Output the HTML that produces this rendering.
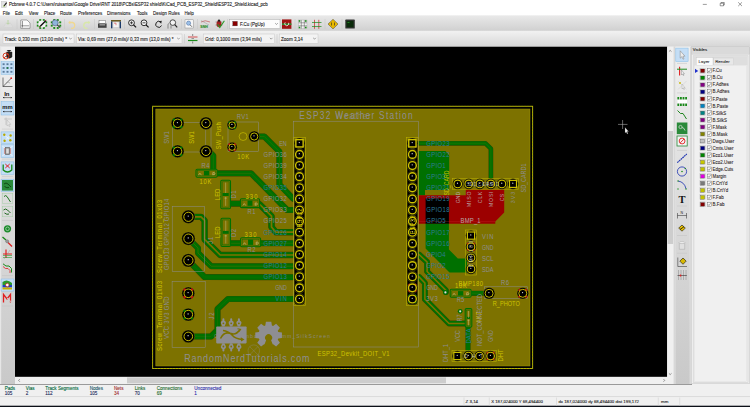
<!DOCTYPE html><html><head><meta charset="utf-8"><style>html,body{margin:0;padding:0;background:#f0f0f0;overflow:hidden}svg{display:block}</style></head><body><svg width="750" height="407" viewBox="0 0 750 407"><defs><linearGradient id="tb" x1="0" y1="0" x2="0" y2="1"><stop offset="0" stop-color="#e9e9e9"/><stop offset="1" stop-color="#cfcfcf"/></linearGradient><linearGradient id="tb2" x1="0" y1="0" x2="0" y2="1"><stop offset="0" stop-color="#f1f1f1"/><stop offset="1" stop-color="#d6d6d6"/></linearGradient><linearGradient id="vt" x1="0" y1="0" x2="0" y2="1"><stop offset="0" stop-color="#efefef"/><stop offset="0.45" stop-color="#dcdcdc"/><stop offset="1" stop-color="#c9c9c9"/></linearGradient><linearGradient id="cb" x1="0" y1="0" x2="0" y2="1"><stop offset="0" stop-color="#f4f4f4"/><stop offset="1" stop-color="#e6e6e6"/></linearGradient></defs><rect x="0" y="0" width="750" height="407" fill="#f0f0f0" /><rect x="0" y="0" width="750" height="15.5" fill="#ffffff" /><rect x="1.3" y="1.3" width="5.2" height="6.3" fill="#e4e4e4" stroke="#b8b8b8" stroke-width="0.4"/><path d="M4 6 L6.6 2.6" stroke="#111" stroke-width="1.1"/><circle cx="3.9" cy="6.1" r="0.6" fill="#7ab800"/><text x="8.9" y="6.1" font-family="Liberation Sans" font-size="4.41" fill="#1a1a1a" stroke="#1a1a1a" stroke-width="0.1" text-anchor="start" font-weight="normal" >Pcbnew 4.0.7 C:\Users\ruisantos\Google Drive\RNT 2018\PCBs\ESP32 shield\KiCad_PCB_ESP32_Shield\ESP32_Shield.kicad_pcb</text><path d="M702.8 4.4 H706.8" stroke="#222" stroke-width="0.45"/><path d="M720.2 3.3 H723.5 V5.8 H720.2 Z M721 3.3 V2.5 H724.3 V5.0 H723.5" fill="none" stroke="#222" stroke-width="0.45"/><path d="M738.2 2.3 L742 6.1 M742 2.3 L738.2 6.1" stroke="#222" stroke-width="0.45"/><text x="2.7" y="14.6" font-family="Liberation Sans" font-size="4.5" fill="#1a1a1a" stroke="#1a1a1a" stroke-width="0.1" text-anchor="start" font-weight="normal" >File</text><text x="15" y="14.6" font-family="Liberation Sans" font-size="4.5" fill="#1a1a1a" stroke="#1a1a1a" stroke-width="0.1" text-anchor="start" font-weight="normal" >Edit</text><text x="28.7" y="14.6" font-family="Liberation Sans" font-size="4.5" fill="#1a1a1a" stroke="#1a1a1a" stroke-width="0.1" text-anchor="start" font-weight="normal" >View</text><text x="44" y="14.6" font-family="Liberation Sans" font-size="4.5" fill="#1a1a1a" stroke="#1a1a1a" stroke-width="0.1" text-anchor="start" font-weight="normal" >Place</text><text x="60" y="14.6" font-family="Liberation Sans" font-size="4.5" fill="#1a1a1a" stroke="#1a1a1a" stroke-width="0.1" text-anchor="start" font-weight="normal" >Route</text><text x="78" y="14.6" font-family="Liberation Sans" font-size="4.5" fill="#1a1a1a" stroke="#1a1a1a" stroke-width="0.1" text-anchor="start" font-weight="normal" >Preferences</text><text x="107" y="14.6" font-family="Liberation Sans" font-size="4.5" fill="#1a1a1a" stroke="#1a1a1a" stroke-width="0.1" text-anchor="start" font-weight="normal" >Dimensions</text><text x="137" y="14.6" font-family="Liberation Sans" font-size="4.5" fill="#1a1a1a" stroke="#1a1a1a" stroke-width="0.1" text-anchor="start" font-weight="normal" >Tools</text><text x="153" y="14.6" font-family="Liberation Sans" font-size="4.5" fill="#1a1a1a" stroke="#1a1a1a" stroke-width="0.1" text-anchor="start" font-weight="normal" >Design Rules</text><text x="184.6" y="14.6" font-family="Liberation Sans" font-size="4.5" fill="#1a1a1a" stroke="#1a1a1a" stroke-width="0.1" text-anchor="start" font-weight="normal" >Help</text><rect x="0" y="15.5" width="750" height="16" fill="url(#tb)" /><rect x="0" y="31.4" width="750" height="15.3" fill="url(#tb2)" /><path d="M0 31.2 H750" stroke="#f8f8f8" stroke-width="0.6"/><path d="M3.5 27.5 L5.5 23.5 H11 L13 27.5 Z" fill="#dcdcdc" stroke="#cfcfcf" stroke-width="0.4"/><path d="M8 20 V24 M6.5 22.8 L8 24.3 L9.5 22.8" stroke="#b7d4a0" stroke-width="0.9" fill="none"/><path d="M17 19 V29" stroke="#c4c4c4" stroke-width="0.5"/><path d="M20.8 20 H27 L30 23 V28.3 H20.8 Z" fill="#fbfbfb" stroke="#444" stroke-width="0.45"/><path d="M22.5 21 V27.5 M21.3 25.8 H29" stroke="#222" stroke-width="0.45"/><path d="M33.5 19 V29" stroke="#c4c4c4" stroke-width="0.5"/><rect x="45.30" y="24.70" width="1.9" height="1.9" fill="#1a8a1a"/><rect x="42.81" y="27.02" width="1.9" height="1.9" fill="#1a8a1a"/><rect x="39.29" y="27.02" width="1.9" height="1.9" fill="#1a8a1a"/><rect x="36.80" y="24.70" width="1.9" height="1.9" fill="#1a8a1a"/><rect x="36.80" y="21.40" width="1.9" height="1.9" fill="#1a8a1a"/><rect x="39.29" y="19.08" width="1.9" height="1.9" fill="#1a8a1a"/><rect x="42.81" y="19.08" width="1.9" height="1.9" fill="#1a8a1a"/><rect x="45.30" y="21.40" width="1.9" height="1.9" fill="#1a8a1a"/><circle cx="42" cy="24" r="3.6" fill="#f4f4f4"/><path d="M39.5 27 L46 20.5" stroke="#111" stroke-width="1.5"/><path d="M39.2 27.3 l1 -1" stroke="#e8c040" stroke-width="0.9"/><path d="M45.3 20.8 l0.9 -0.9" stroke="#c04040" stroke-width="0.9"/><rect x="59.30" y="24.70" width="1.9" height="1.9" fill="#1a8a1a"/><rect x="56.81" y="27.02" width="1.9" height="1.9" fill="#1a8a1a"/><rect x="53.29" y="27.02" width="1.9" height="1.9" fill="#1a8a1a"/><rect x="50.80" y="24.70" width="1.9" height="1.9" fill="#1a8a1a"/><rect x="50.80" y="21.40" width="1.9" height="1.9" fill="#1a8a1a"/><rect x="53.29" y="19.08" width="1.9" height="1.9" fill="#1a8a1a"/><rect x="56.81" y="19.08" width="1.9" height="1.9" fill="#1a8a1a"/><rect x="59.30" y="21.40" width="1.9" height="1.9" fill="#1a8a1a"/><circle cx="55.2" cy="22.8" r="3" fill="#8fb4dc" stroke="#4a5a70" stroke-width="0.6"/><path d="M57.3 24.9 L60.2 27.6" stroke="#333" stroke-width="1.1"/><path d="M64.5 19 V29" stroke="#c4c4c4" stroke-width="0.5"/><path d="M69 22.5 H72.5 A3 3 0 0 1 72.5 28.3 H71" fill="none" stroke="#f0d890" stroke-width="1.3"/><path d="M68.2 22.5 l2 -1.8 v3.6z" fill="#f0d890"/><path d="M89.5 22.5 H86 A3 3 0 0 0 86 28.3 H87.5" fill="none" stroke="#d8e8a8" stroke-width="1.3"/><path d="M90.3 22.5 l-2 -1.8 v3.6z" fill="#d8e8a8"/><path d="M94.5 19 V29" stroke="#c4c4c4" stroke-width="0.5"/><rect x="99" y="20.5" width="6.5" height="3" fill="#fff" stroke="#555" stroke-width="0.4"/><rect x="98" y="23.5" width="8.6" height="4.3" fill="#444" /><rect x="99.5" y="24.5" width="5.6" height="0.8" fill="#ddd"/><rect x="111" y="20" width="10" height="1.6" fill="#6a5a20"/><rect x="111" y="21.5" width="1.4" height="6.8" fill="#1a3a6a"/><rect x="119.6" y="21.5" width="1.4" height="6.8" fill="#1a3a6a"/><rect x="113" y="22" width="6" height="5.5" fill="#f4f4f4" stroke="#aaa" stroke-width="0.3"/><path d="M114 23.2 h2 v2" stroke="#d04040" stroke-width="0.6" fill="none"/><path d="M124.5 19 V29" stroke="#c4c4c4" stroke-width="0.5"/><circle cx="131.5" cy="22.8" r="2.9" fill="#f4f4f4" stroke="#111" stroke-width="0.85"/><path d="M133.5 24.8 L136.1 27.4" stroke="#111" stroke-width="1.2"/><path d="M130.0 22.8 h3 M131.5 21.3 v3" stroke="#111" stroke-width="0.7"/><circle cx="144" cy="22.8" r="2.9" fill="#f4f4f4" stroke="#111" stroke-width="0.85"/><path d="M146 24.8 L148.6 27.4" stroke="#111" stroke-width="1.2"/><path d="M142.5 22.8 h3" stroke="#111" stroke-width="0.7"/><path d="M160.6 22 A3 3 0 1 0 161.5 25.5" fill="none" stroke="#222" stroke-width="1"/><path d="M158.8 21.2 l3 -0.4 l-0.6 3z" fill="#222"/><circle cx="172.8" cy="22.6" r="2.8" fill="#f4f4f4" stroke="#222" stroke-width="0.8"/><path d="M174.8 24.6 L177.2 27.4" stroke="#222" stroke-width="1.1"/><path d="M168 28.6 v-4 q0 -1 1 -1 M171 28.6 v-3.2" stroke="#666" stroke-width="0.7" fill="none"/><path d="M181.5 19 V29" stroke="#c4c4c4" stroke-width="0.5"/><rect x="185" y="19.8" width="8.2" height="8.2" fill="#f8f8f8" stroke="#888" stroke-width="0.45"/><circle cx="188.6" cy="23.2" r="2.1" fill="#9cc0e8" stroke="#4a6a9a" stroke-width="0.5"/><path d="M190 24.8 l2 2" stroke="#333" stroke-width="0.7"/><path d="M197.5 19 V29" stroke="#c4c4c4" stroke-width="0.5"/><path d="M201 22 Q205 19.5 210 22" stroke="#c04040" stroke-width="0.6" fill="none"/><path d="M201 20.5 L209 25" stroke="#888" stroke-width="0.4"/><text x="200.3" y="28.4" font-family="Liberation Sans" font-size="3.5" fill="#1a8a1a" stroke="#1a8a1a" stroke-width="0.1" text-anchor="start" font-weight="bold" >SNH</text><ellipse cx="219" cy="24" rx="2.5" ry="3.3" fill="#b02020"/><circle cx="219" cy="20.6" r="1.2" fill="#222"/><path d="M215.5 22 l7 0 M215.5 25 l7 0" stroke="#333" stroke-width="0.35"/><path d="M217.6 24.2 L219.8 27.5 L224.4 20.8" fill="none" stroke="#2a9a2a" stroke-width="1.1"/><path d="M227.5 19 V29" stroke="#c4c4c4" stroke-width="0.5"/><rect x="229.3" y="19.3" width="50.69999999999999" height="9.3" fill="#fcfcfc" stroke="#a8a8a8" stroke-width="0.5"/><path d="M275.2 23.150000000000002 l1.3 1.3 l1.3 -1.3" fill="none" stroke="#333" stroke-width="0.45"/><rect x="232.8" y="21.3" width="4.6" height="4.6" fill="#8a0000" /><rect x="232.8" y="21.3" width="4.6" height="4.6" fill="none" stroke="#444" stroke-width="0.3"/><text x="240" y="25.5" font-family="Liberation Sans" font-size="4.5" fill="#1a1a1a" stroke="#1a1a1a" stroke-width="0.1" text-anchor="start" font-weight="normal" >F.Cu (PgUp)</text><rect x="282" y="19.4" width="9.4" height="9.4" fill="#a01414" /><path d="M282 24.2 H291.4" stroke="#2a8a2a" stroke-width="1.6"/><path d="M285.2 22.4 A2 2 0 1 0 288.6 22.8" fill="none" stroke="#fff" stroke-width="0.8"/><path d="M295 19 V29" stroke="#c4c4c4" stroke-width="0.5"/><rect x="298.5" y="20" width="8.5" height="8.5" fill="#f4f4f4" stroke="#999" stroke-width="0.3"/><path d="M301.3 20 V28.5 M304.3 20 V28.5 M298.5 22.8 H307 M298.5 25.8 H307" stroke="#555" stroke-width="0.5"/><rect x="298.7" y="20.2" width="1.6" height="1.6" fill="#1a8a1a"/><rect x="298.7" y="26.7" width="1.6" height="1.6" fill="#1a8a1a"/><rect x="305.0" y="20.2" width="1.6" height="1.6" fill="#1a8a1a"/><rect x="305.0" y="26.7" width="1.6" height="1.6" fill="#1a8a1a"/><path d="M314.5 19.8 V28.8 M318.8 19.8 V28.8" stroke="#d02020" stroke-width="0.7"/><path d="M312 22.5 H321.5 M312 26.5 H321.5" stroke="#1a8a1a" stroke-width="0.7"/><path d="M325 19 V29" stroke="#c4c4c4" stroke-width="0.5"/><path d="M333 19.3 L338 24.1 L333 28.9 L328 24.1 Z" fill="#e8b800" stroke="#333" stroke-width="0.45"/><path d="M331.5 22.5 v3 M334.5 22.5 v3" stroke="#222" stroke-width="0.6"/><path d="M342 19 V29" stroke="#c4c4c4" stroke-width="0.5"/><rect x="345.3" y="19.6" width="9.5" height="9" fill="#333" rx="0.6"/><rect x="346.5" y="20.8" width="7" height="6.5" fill="#0a2a0a"/><path d="M347.5 22.5 h2" stroke="#3c3" stroke-width="0.5"/><rect x="3" y="34" width="71" height="9.299999999999997" fill="#f3f3f3" stroke="#c8c8c8" stroke-width="0.5"/><path d="M69.2 37.85 l1.3 1.3 l1.3 -1.3" fill="none" stroke="#333" stroke-width="0.45"/><text x="4.5" y="40.55" font-family="Liberation Sans" font-size="4.58" fill="#1a1a1a" stroke="#1a1a1a" stroke-width="0.1" text-anchor="start" font-weight="normal" >Track: 0,330 mm (13,00 mils) *</text><rect x="76.5" y="34" width="105.5" height="9.299999999999997" fill="#f3f3f3" stroke="#c8c8c8" stroke-width="0.5"/><path d="M177.2 37.85 l1.3 1.3 l1.3 -1.3" fill="none" stroke="#333" stroke-width="0.45"/><text x="78" y="40.55" font-family="Liberation Sans" font-size="4.58" fill="#1a1a1a" stroke="#1a1a1a" stroke-width="0.1" text-anchor="start" font-weight="normal" >Via: 0,69 mm (27,0 mils)/ 0,33 mm (13,0 mils) *</text><path d="M184.5 34 V43.5" stroke="#c4c4c4" stroke-width="0.5"/><path d="M188 37 H197.5" stroke="#d04040" stroke-width="0.9"/><path d="M188 40.5 H197.5" stroke="#1a8a1a" stroke-width="1.2"/><path d="M192.7 34 V36 M192.7 41.5 V43.5" stroke="#222" stroke-width="0.5"/><path d="M191.5 38.5 h2.5" stroke="#222" stroke-width="0.4"/><rect x="203.3" y="34" width="71.39999999999998" height="9.299999999999997" fill="#f3f3f3" stroke="#c8c8c8" stroke-width="0.5"/><path d="M269.9 37.85 l1.3 1.3 l1.3 -1.3" fill="none" stroke="#333" stroke-width="0.45"/><text x="205" y="40.55" font-family="Liberation Sans" font-size="4.58" fill="#1a1a1a" stroke="#1a1a1a" stroke-width="0.1" text-anchor="start" font-weight="normal" >Grid: 0,1000 mm (3,94 mils)</text><path d="M277 34 V43.5" stroke="#c4c4c4" stroke-width="0.5"/><rect x="279.3" y="34" width="38.69999999999999" height="9.299999999999997" fill="#f3f3f3" stroke="#c8c8c8" stroke-width="0.5"/><path d="M313.2 37.85 l1.3 1.3 l1.3 -1.3" fill="none" stroke="#333" stroke-width="0.45"/><text x="281" y="40.55" font-family="Liberation Sans" font-size="4.58" fill="#1a1a1a" stroke="#1a1a1a" stroke-width="0.1" text-anchor="start" font-weight="normal" >Zoom 3,14</text><rect x="0" y="46.7" width="15" height="337.5" fill="url(#vt)" /><rect x="0" y="46.7" width="1.2" height="337.5" fill="#e6e6e6" /><rect x="15" y="46.7" width="652.2" height="330.2" fill="#000" /><rect x="667.2" y="46.7" width="6.4" height="337.3" fill="#f0f0f0" /><rect x="667.7" y="131" width="5.4" height="113" fill="#cdcdcd" /><path d="M668.9 51.6 l1.3 -1.2 l1.3 1.2" fill="none" stroke="#333" stroke-width="0.5"/><path d="M668.9 373.4 l1.3 1.2 l1.3 -1.2" fill="none" stroke="#333" stroke-width="0.5"/><rect x="15" y="376.9" width="652.2" height="6.9" fill="#f0f0f0" /><rect x="127" y="377.4" width="319" height="5.9" fill="#cdcdcd" /><path d="M19.8 379.1 l-1.2 1.3 l1.2 1.3" fill="none" stroke="#333" stroke-width="0.5"/><path d="M663.5 379.1 l1.2 1.3 l-1.2 1.3" fill="none" stroke="#333" stroke-width="0.5"/><rect x="673.6" y="46.7" width="2" height="337.3" fill="#d8d8d8" /><rect x="675.5" y="46.7" width="14.3" height="337.3" fill="url(#vt)" /><rect x="0" y="384" width="692" height="1" fill="#9a9a9a" /><rect x="690" y="46.7" width="60" height="337.3" fill="#f0f0f0" /><rect x="690" y="46.7" width="1.2" height="337.3" fill="#d9d9d9" /><rect x="691.2" y="46.7" width="58.8" height="7.5" fill="#dadada" /><text x="692.7" y="51.4" font-family="Liberation Sans" font-size="4.2" fill="#222" stroke="#222" stroke-width="0.1" text-anchor="start" font-weight="normal" >Visibles</text><rect x="691.4" y="46.7" width="58.2" height="337" fill="none" stroke="#c4c4c4" stroke-width="0.6"/><rect x="691.6" y="54.5" width="57.8" height="329" fill="#f0f0f0" stroke="#cfcfcf" stroke-width="0.5"/><rect x="693.2" y="55.8" width="54.8" height="326.5" fill="#f0f0f0" stroke="#c8c8c8" stroke-width="0.5"/><rect x="693.5" y="56.1" width="54.2" height="9" fill="#dedede"/><rect x="713.5" y="58" width="20.2" height="7" fill="#e8e8e8" stroke="#c8c8c8" stroke-width="0.4"/><rect x="696.2" y="57.6" width="16.8" height="7.6" fill="#fafafa" stroke="#c8c8c8" stroke-width="0.4"/><text x="698.6" y="63.3" font-family="Liberation Sans" font-size="4.4" fill="#1a1a1a" stroke="#1a1a1a" stroke-width="0.05" text-anchor="start" font-weight="normal" >Layer</text><text x="715.2" y="63.3" font-family="Liberation Sans" font-size="4.4" fill="#1a1a1a" stroke="#1a1a1a" stroke-width="0.05" text-anchor="start" font-weight="normal" >Render</text><rect x="694.2" y="65.2" width="52.5" height="316" fill="#f0f0f0" stroke="#dcdcdc" stroke-width="0.4"/><rect x="699.9" y="68.30" width="5.4" height="5" fill="#e4e4e4" stroke="#b0b0b0" stroke-width="0.3"/><rect x="700.6" y="69.00" width="4" height="3.6" fill="#840000" stroke="#333" stroke-width="0.25"/><rect x="707.2" y="68.60" width="4.3" height="4.3" fill="#fafafa" stroke="#444" stroke-width="0.35"/><path d="M707.9 70.70 l1.1 1.3 l1.8 -2.7" fill="none" stroke="#222" stroke-width="0.4"/><text x="712.6" y="72.39999999999999" font-family="Liberation Sans" font-size="4.45" fill="#2a1a1a" stroke="#2a1a1a" stroke-width="0.07" text-anchor="start" font-weight="normal" >F.Cu</text><rect x="699.9" y="75.33" width="5.4" height="5" fill="#e4e4e4" stroke="#b0b0b0" stroke-width="0.3"/><rect x="700.6" y="76.03" width="4" height="3.6" fill="#008400" stroke="#333" stroke-width="0.25"/><rect x="707.2" y="75.63" width="4.3" height="4.3" fill="#fafafa" stroke="#444" stroke-width="0.35"/><path d="M707.9 77.73 l1.1 1.3 l1.8 -2.7" fill="none" stroke="#222" stroke-width="0.4"/><text x="712.6" y="79.42999999999999" font-family="Liberation Sans" font-size="4.45" fill="#2a1a1a" stroke="#2a1a1a" stroke-width="0.07" text-anchor="start" font-weight="normal" >B.Cu</text><rect x="699.9" y="82.36" width="5.4" height="5" fill="#e4e4e4" stroke="#b0b0b0" stroke-width="0.3"/><rect x="700.6" y="83.06" width="4" height="3.6" fill="#840084" stroke="#333" stroke-width="0.25"/><rect x="707.2" y="82.66" width="4.3" height="4.3" fill="#fafafa" stroke="#444" stroke-width="0.35"/><path d="M707.9 84.76 l1.1 1.3 l1.8 -2.7" fill="none" stroke="#222" stroke-width="0.4"/><text x="712.6" y="86.46" font-family="Liberation Sans" font-size="4.45" fill="#2a1a1a" stroke="#2a1a1a" stroke-width="0.07" text-anchor="start" font-weight="normal" >F.Adhes</text><rect x="699.9" y="89.39" width="5.4" height="5" fill="#e4e4e4" stroke="#b0b0b0" stroke-width="0.3"/><rect x="700.6" y="90.09" width="4" height="3.6" fill="#000084" stroke="#333" stroke-width="0.25"/><rect x="707.2" y="89.69" width="4.3" height="4.3" fill="#fafafa" stroke="#444" stroke-width="0.35"/><path d="M707.9 91.79 l1.1 1.3 l1.8 -2.7" fill="none" stroke="#222" stroke-width="0.4"/><text x="712.6" y="93.49" font-family="Liberation Sans" font-size="4.45" fill="#2a1a1a" stroke="#2a1a1a" stroke-width="0.07" text-anchor="start" font-weight="normal" >B.Adhes</text><rect x="699.9" y="96.42" width="5.4" height="5" fill="#e4e4e4" stroke="#b0b0b0" stroke-width="0.3"/><rect x="700.6" y="97.12" width="4" height="3.6" fill="#840000" stroke="#333" stroke-width="0.25"/><rect x="707.2" y="96.72" width="4.3" height="4.3" fill="#fafafa" stroke="#444" stroke-width="0.35"/><path d="M707.9 98.82 l1.1 1.3 l1.8 -2.7" fill="none" stroke="#222" stroke-width="0.4"/><text x="712.6" y="100.52" font-family="Liberation Sans" font-size="4.45" fill="#2a1a1a" stroke="#2a1a1a" stroke-width="0.07" text-anchor="start" font-weight="normal" >F.Paste</text><rect x="699.9" y="103.45" width="5.4" height="5" fill="#e4e4e4" stroke="#b0b0b0" stroke-width="0.3"/><rect x="700.6" y="104.15" width="4" height="3.6" fill="#0084c2" stroke="#333" stroke-width="0.25"/><rect x="707.2" y="103.75" width="4.3" height="4.3" fill="#fafafa" stroke="#444" stroke-width="0.35"/><path d="M707.9 105.85 l1.1 1.3 l1.8 -2.7" fill="none" stroke="#222" stroke-width="0.4"/><text x="712.6" y="107.54999999999998" font-family="Liberation Sans" font-size="4.45" fill="#2a1a1a" stroke="#2a1a1a" stroke-width="0.07" text-anchor="start" font-weight="normal" >B.Paste</text><rect x="699.9" y="110.48" width="5.4" height="5" fill="#e4e4e4" stroke="#b0b0b0" stroke-width="0.3"/><rect x="700.6" y="111.18" width="4" height="3.6" fill="#008484" stroke="#333" stroke-width="0.25"/><rect x="707.2" y="110.78" width="4.3" height="4.3" fill="#fafafa" stroke="#444" stroke-width="0.35"/><path d="M707.9 112.88 l1.1 1.3 l1.8 -2.7" fill="none" stroke="#222" stroke-width="0.4"/><text x="712.6" y="114.57999999999998" font-family="Liberation Sans" font-size="4.45" fill="#2a1a1a" stroke="#2a1a1a" stroke-width="0.07" text-anchor="start" font-weight="normal" >F.SilkS</text><rect x="699.9" y="117.51" width="5.4" height="5" fill="#e4e4e4" stroke="#b0b0b0" stroke-width="0.3"/><rect x="700.6" y="118.21" width="4" height="3.6" fill="#840084" stroke="#333" stroke-width="0.25"/><rect x="707.2" y="117.81" width="4.3" height="4.3" fill="#fafafa" stroke="#444" stroke-width="0.35"/><path d="M707.9 119.91 l1.1 1.3 l1.8 -2.7" fill="none" stroke="#222" stroke-width="0.4"/><text x="712.6" y="121.60999999999999" font-family="Liberation Sans" font-size="4.45" fill="#2a1a1a" stroke="#2a1a1a" stroke-width="0.07" text-anchor="start" font-weight="normal" >B.SilkS</text><rect x="699.9" y="124.54" width="5.4" height="5" fill="#e4e4e4" stroke="#b0b0b0" stroke-width="0.3"/><rect x="700.6" y="125.24" width="4" height="3.6" fill="#840084" stroke="#333" stroke-width="0.25"/><rect x="707.2" y="124.84" width="4.3" height="4.3" fill="#fafafa" stroke="#444" stroke-width="0.35"/><path d="M707.9 126.94 l1.1 1.3 l1.8 -2.7" fill="none" stroke="#222" stroke-width="0.4"/><text x="712.6" y="128.64" font-family="Liberation Sans" font-size="4.45" fill="#2a1a1a" stroke="#2a1a1a" stroke-width="0.07" text-anchor="start" font-weight="normal" >F.Mask</text><rect x="699.9" y="131.57" width="5.4" height="5" fill="#e4e4e4" stroke="#b0b0b0" stroke-width="0.3"/><rect x="700.6" y="132.27" width="4" height="3.6" fill="#848400" stroke="#333" stroke-width="0.25"/><rect x="707.2" y="131.87" width="4.3" height="4.3" fill="#fafafa" stroke="#444" stroke-width="0.35"/><path d="M707.9 133.97 l1.1 1.3 l1.8 -2.7" fill="none" stroke="#222" stroke-width="0.4"/><text x="712.6" y="135.67" font-family="Liberation Sans" font-size="4.45" fill="#2a1a1a" stroke="#2a1a1a" stroke-width="0.07" text-anchor="start" font-weight="normal" >B.Mask</text><rect x="699.9" y="138.60" width="5.4" height="5" fill="#e4e4e4" stroke="#b0b0b0" stroke-width="0.3"/><rect x="700.6" y="139.30" width="4" height="3.6" fill="#c2c2c2" stroke="#333" stroke-width="0.25"/><rect x="707.2" y="138.90" width="4.3" height="4.3" fill="#fafafa" stroke="#444" stroke-width="0.35"/><path d="M707.9 141.00 l1.1 1.3 l1.8 -2.7" fill="none" stroke="#222" stroke-width="0.4"/><text x="712.6" y="142.7" font-family="Liberation Sans" font-size="4.45" fill="#2a1a1a" stroke="#2a1a1a" stroke-width="0.07" text-anchor="start" font-weight="normal" >Dwgs.User</text><rect x="699.9" y="145.63" width="5.4" height="5" fill="#e4e4e4" stroke="#b0b0b0" stroke-width="0.3"/><rect x="700.6" y="146.33" width="4" height="3.6" fill="#000084" stroke="#333" stroke-width="0.25"/><rect x="707.2" y="145.93" width="4.3" height="4.3" fill="#fafafa" stroke="#444" stroke-width="0.35"/><path d="M707.9 148.03 l1.1 1.3 l1.8 -2.7" fill="none" stroke="#222" stroke-width="0.4"/><text x="712.6" y="149.73" font-family="Liberation Sans" font-size="4.45" fill="#2a1a1a" stroke="#2a1a1a" stroke-width="0.07" text-anchor="start" font-weight="normal" >Cmts.User</text><rect x="699.9" y="152.66" width="5.4" height="5" fill="#e4e4e4" stroke="#b0b0b0" stroke-width="0.3"/><rect x="700.6" y="153.36" width="4" height="3.6" fill="#008400" stroke="#333" stroke-width="0.25"/><rect x="707.2" y="152.96" width="4.3" height="4.3" fill="#fafafa" stroke="#444" stroke-width="0.35"/><path d="M707.9 155.06 l1.1 1.3 l1.8 -2.7" fill="none" stroke="#222" stroke-width="0.4"/><text x="712.6" y="156.76" font-family="Liberation Sans" font-size="4.45" fill="#2a1a1a" stroke="#2a1a1a" stroke-width="0.07" text-anchor="start" font-weight="normal" >Eco1.User</text><rect x="699.9" y="159.69" width="5.4" height="5" fill="#e4e4e4" stroke="#b0b0b0" stroke-width="0.3"/><rect x="700.6" y="160.39" width="4" height="3.6" fill="#c8c800" stroke="#333" stroke-width="0.25"/><rect x="707.2" y="159.99" width="4.3" height="4.3" fill="#fafafa" stroke="#444" stroke-width="0.35"/><path d="M707.9 162.09 l1.1 1.3 l1.8 -2.7" fill="none" stroke="#222" stroke-width="0.4"/><text x="712.6" y="163.79" font-family="Liberation Sans" font-size="4.45" fill="#2a1a1a" stroke="#2a1a1a" stroke-width="0.07" text-anchor="start" font-weight="normal" >Eco2.User</text><rect x="699.9" y="166.72" width="5.4" height="5" fill="#e4e4e4" stroke="#b0b0b0" stroke-width="0.3"/><rect x="700.6" y="167.42" width="4" height="3.6" fill="#c2c200" stroke="#333" stroke-width="0.25"/><rect x="707.2" y="167.02" width="4.3" height="4.3" fill="#fafafa" stroke="#444" stroke-width="0.35"/><path d="M707.9 169.12 l1.1 1.3 l1.8 -2.7" fill="none" stroke="#222" stroke-width="0.4"/><text x="712.6" y="170.82" font-family="Liberation Sans" font-size="4.45" fill="#2a1a1a" stroke="#2a1a1a" stroke-width="0.07" text-anchor="start" font-weight="normal" >Edge.Cuts</text><rect x="699.9" y="173.75" width="5.4" height="5" fill="#e4e4e4" stroke="#b0b0b0" stroke-width="0.3"/><rect x="700.6" y="174.45" width="4" height="3.6" fill="#e000e0" stroke="#333" stroke-width="0.25"/><rect x="707.2" y="174.05" width="4.3" height="4.3" fill="#fafafa" stroke="#444" stroke-width="0.35"/><path d="M707.9 176.15 l1.1 1.3 l1.8 -2.7" fill="none" stroke="#222" stroke-width="0.4"/><text x="712.6" y="177.85" font-family="Liberation Sans" font-size="4.45" fill="#2a1a1a" stroke="#2a1a1a" stroke-width="0.07" text-anchor="start" font-weight="normal" >Margin</text><rect x="699.9" y="180.78" width="5.4" height="5" fill="#e4e4e4" stroke="#b0b0b0" stroke-width="0.3"/><rect x="700.6" y="181.48" width="4" height="3.6" fill="#7a7a7a" stroke="#333" stroke-width="0.25"/><rect x="707.2" y="181.08" width="4.3" height="4.3" fill="#fafafa" stroke="#444" stroke-width="0.35"/><path d="M707.9 183.18 l1.1 1.3 l1.8 -2.7" fill="none" stroke="#222" stroke-width="0.4"/><text x="712.6" y="184.88" font-family="Liberation Sans" font-size="4.45" fill="#2a1a1a" stroke="#2a1a1a" stroke-width="0.07" text-anchor="start" font-weight="normal" >F.CrtYd</text><rect x="699.9" y="187.81" width="5.4" height="5" fill="#e4e4e4" stroke="#b0b0b0" stroke-width="0.3"/><rect x="700.6" y="188.51" width="4" height="3.6" fill="#c2c200" stroke="#333" stroke-width="0.25"/><rect x="707.2" y="188.11" width="4.3" height="4.3" fill="#fafafa" stroke="#444" stroke-width="0.35"/><path d="M707.9 190.21 l1.1 1.3 l1.8 -2.7" fill="none" stroke="#222" stroke-width="0.4"/><text x="712.6" y="191.91" font-family="Liberation Sans" font-size="4.45" fill="#2a1a1a" stroke="#2a1a1a" stroke-width="0.07" text-anchor="start" font-weight="normal" >B.CrtYd</text><rect x="699.9" y="194.84" width="5.4" height="5" fill="#e4e4e4" stroke="#b0b0b0" stroke-width="0.3"/><rect x="700.6" y="195.54" width="4" height="3.6" fill="#c2c200" stroke="#333" stroke-width="0.25"/><rect x="707.2" y="195.14" width="4.3" height="4.3" fill="#fafafa" stroke="#444" stroke-width="0.35"/><path d="M707.9 197.24 l1.1 1.3 l1.8 -2.7" fill="none" stroke="#222" stroke-width="0.4"/><text x="712.6" y="198.94" font-family="Liberation Sans" font-size="4.45" fill="#2a1a1a" stroke="#2a1a1a" stroke-width="0.07" text-anchor="start" font-weight="normal" >F.Fab</text><rect x="699.9" y="201.87" width="5.4" height="5" fill="#e4e4e4" stroke="#b0b0b0" stroke-width="0.3"/><rect x="700.6" y="202.57" width="4" height="3.6" fill="#840000" stroke="#333" stroke-width="0.25"/><rect x="707.2" y="202.17" width="4.3" height="4.3" fill="#fafafa" stroke="#444" stroke-width="0.35"/><path d="M707.9 204.27 l1.1 1.3 l1.8 -2.7" fill="none" stroke="#222" stroke-width="0.4"/><text x="712.6" y="205.97" font-family="Liberation Sans" font-size="4.45" fill="#2a1a1a" stroke="#2a1a1a" stroke-width="0.07" text-anchor="start" font-weight="normal" >B.Fab</text><path d="M695 68.8 L698.3 70.9 L695 73 Z" fill="#2233cc"/><rect x="0" y="385" width="750" height="11.7" fill="#f0f0f0" /><rect x="0" y="396.4" width="750" height="0.8" fill="#d0d0d0" /><rect x="0" y="397.2" width="750" height="8.5" fill="#f0f0f0" /><rect x="0" y="405.7" width="750" height="1.3" fill="#0c1018" /><text x="4.7" y="389.8" font-family="Liberation Sans" font-size="4.6" fill="#006a3a" stroke="#006a3a" stroke-width="0.1" text-anchor="start" font-weight="normal" >Pads</text><text x="4.7" y="395.4" font-family="Liberation Sans" font-size="4.6" fill="#1a2a5a" stroke="#1a2a5a" stroke-width="0.1" text-anchor="start" font-weight="normal" >105</text><text x="25.8" y="389.8" font-family="Liberation Sans" font-size="4.6" fill="#006a3a" stroke="#006a3a" stroke-width="0.1" text-anchor="start" font-weight="normal" >Vias</text><text x="25.8" y="395.4" font-family="Liberation Sans" font-size="4.6" fill="#1a2a5a" stroke="#1a2a5a" stroke-width="0.1" text-anchor="start" font-weight="normal" >2</text><text x="45.3" y="389.8" font-family="Liberation Sans" font-size="4.6" fill="#006a3a" stroke="#006a3a" stroke-width="0.1" text-anchor="start" font-weight="normal" >Track Segments</text><text x="45.3" y="395.4" font-family="Liberation Sans" font-size="4.6" fill="#1a2a5a" stroke="#1a2a5a" stroke-width="0.1" text-anchor="start" font-weight="normal" >112</text><text x="89.7" y="389.8" font-family="Liberation Sans" font-size="4.6" fill="#1a5a6a" stroke="#1a5a6a" stroke-width="0.1" text-anchor="start" font-weight="normal" >Nodes</text><text x="89.7" y="395.4" font-family="Liberation Sans" font-size="4.6" fill="#1a2a5a" stroke="#1a2a5a" stroke-width="0.1" text-anchor="start" font-weight="normal" >105</text><text x="114" y="389.8" font-family="Liberation Sans" font-size="4.6" fill="#a02a2a" stroke="#a02a2a" stroke-width="0.1" text-anchor="start" font-weight="normal" >Nets</text><text x="114" y="395.4" font-family="Liberation Sans" font-size="4.6" fill="#a02a2a" stroke="#a02a2a" stroke-width="0.1" text-anchor="start" font-weight="normal" >34</text><text x="134.7" y="389.8" font-family="Liberation Sans" font-size="4.6" fill="#1a6a2a" stroke="#1a6a2a" stroke-width="0.1" text-anchor="start" font-weight="normal" >Links</text><text x="134.7" y="395.4" font-family="Liberation Sans" font-size="4.6" fill="#1a2a5a" stroke="#1a2a5a" stroke-width="0.1" text-anchor="start" font-weight="normal" >70</text><text x="156.7" y="389.8" font-family="Liberation Sans" font-size="4.6" fill="#1a6a2a" stroke="#1a6a2a" stroke-width="0.1" text-anchor="start" font-weight="normal" >Connections</text><text x="156.7" y="395.4" font-family="Liberation Sans" font-size="4.6" fill="#1a6a2a" stroke="#1a6a2a" stroke-width="0.1" text-anchor="start" font-weight="normal" >69</text><text x="194.3" y="389.8" font-family="Liberation Sans" font-size="4.6" fill="#2a2aa8" stroke="#2a2aa8" stroke-width="0.1" text-anchor="start" font-weight="normal" >Unconnected</text><text x="194.3" y="395.4" font-family="Liberation Sans" font-size="4.6" fill="#2a2aa8" stroke="#2a2aa8" stroke-width="0.1" text-anchor="start" font-weight="normal" >1</text><path d="M464 397.5 V405.5" stroke="#d4d4d4" stroke-width="0.6"/><path d="M489.3 397.5 V405.5" stroke="#d4d4d4" stroke-width="0.6"/><path d="M556.5 397.5 V405.5" stroke="#d4d4d4" stroke-width="0.6"/><path d="M658.3 397.5 V405.5" stroke="#d4d4d4" stroke-width="0.6"/><path d="M679.7 397.5 V405.5" stroke="#d4d4d4" stroke-width="0.6"/><text x="465.6" y="403.1" font-family="Liberation Sans" font-size="4.4" fill="#1a1a1a" stroke="#1a1a1a" stroke-width="0.1" text-anchor="start" font-weight="normal" >Z 3,14</text><text x="491.2" y="403.1" font-family="Liberation Sans" font-size="4.25" fill="#1a1a1a" stroke="#1a1a1a" stroke-width="0.1" text-anchor="start" font-weight="normal" >X 187,024000  Y 68,494400</text><text x="558.4" y="403.1" font-family="Liberation Sans" font-size="4.32" fill="#1a1a1a" stroke="#1a1a1a" stroke-width="0.1" text-anchor="start" font-weight="normal" >dx 187,024000  dy 68,494400  dist 199,172</text><text x="661" y="403.1" font-family="Liberation Sans" font-size="4.4" fill="#1a1a1a" stroke="#1a1a1a" stroke-width="0.1" text-anchor="start" font-weight="normal" >mm</text><path d="M618 124.4 H627.5 M622.6 120 V129" stroke="#a8a8a8" stroke-width="0.6"/><path d="M625 127.5 L625 133 L626.2 131.9 L627.2 134 L628 133.6 L627 131.5 L628.6 131.4 Z" fill="#f0f0f0" stroke="#555" stroke-width="0.2"/><path d="M7 50 l1 1.5 h2 l1 -1.5 M6.5 52 h5.5 v5 q-2.5 2.5 -5.5 0 Z" fill="#222" stroke="#222" stroke-width="0.4"/><circle cx="6" cy="56" r="3" fill="none" stroke="#d02a10" stroke-width="0.9"/><path d="M4 58 L8 54" stroke="#d02a10" stroke-width="0.9"/><rect x="1.1" y="61.7" width="12.80" height="12.70" fill="#c4def6" stroke="#86bde8" stroke-width="0.5"/><rect x="2.6" y="63.300000000000004" width="2" height="1.8" fill="#5a7a9a"/><rect x="2.6" y="67.1" width="2" height="1.8" fill="#5a7a9a"/><rect x="2.6" y="70.89999999999999" width="2" height="1.8" fill="#5a7a9a"/><rect x="6.5" y="63.300000000000004" width="2" height="1.8" fill="#5a7a9a"/><rect x="6.5" y="67.1" width="2" height="1.8" fill="#5a7a9a"/><rect x="6.5" y="70.89999999999999" width="2" height="1.8" fill="#5a7a9a"/><rect x="10.4" y="63.300000000000004" width="2" height="1.8" fill="#5a7a9a"/><rect x="10.4" y="67.1" width="2" height="1.8" fill="#5a7a9a"/><rect x="10.4" y="70.89999999999999" width="2" height="1.8" fill="#5a7a9a"/><rect x="6.7" y="67.2" width="1.6" height="1.6" fill="#1a7a3a"/><path d="M3 77.5 V86.5 H12.5 M3 86.5 L11 78.5" fill="none" stroke="#222" stroke-width="0.6"/><circle cx="11.2" cy="78.2" r="0.9" fill="#e02020"/><path d="M6 83 q2 -2 4 0" fill="none" stroke="#888" stroke-width="0.5"/><text x="4.2" y="96" font-family="Liberation Sans" font-size="6" font-weight="bold" fill="#111">In</text><path d="M3 97.6 H12" stroke="#111" stroke-width="0.5"/><path d="M3 97.6 l1.2 -0.8 v1.6z M12 97.6 l-1.2 -0.8 v1.6z" fill="#111"/><rect x="1.1" y="101.7" width="12.80" height="13.30" fill="#c4def6" stroke="#86bde8" stroke-width="0.5"/><text x="2.3" y="108.6" font-family="Liberation Sans" font-size="5.8" font-weight="bold" fill="#111">mm</text><path d="M3 111.6 H12" stroke="#111" stroke-width="0.5"/><path d="M3 111.6 l1.2 -0.8 v1.6z M12 111.6 l-1.2 -0.8 v1.6z" fill="#111"/><path d="M4 119 H12 M6 117.5 V125" stroke="#aaa" stroke-width="0.5"/><path d="M7 120 v6 l1.3 -1.2 l1 2 l0.8 -0.4 l-1 -2 h1.8z" fill="#e8e8e8" stroke="#999" stroke-width="0.3"/><path d="M2 129.1 H13" stroke="#c0c0c0" stroke-width="0.5"/><rect x="1.1" y="131.9" width="12.80" height="11.70" fill="#c4def6" stroke="#86bde8" stroke-width="0.5"/><path d="M4.5 135 L11 141 M10.5 135 L4.5 141" stroke="#fff" stroke-width="0.7"/><circle cx="4.3" cy="134.8" r="1.2" fill="#b8a800"/><circle cx="10.6" cy="135.5" r="1.2" fill="#b8a800"/><circle cx="4.6" cy="140.8" r="1.2" fill="#b8a800"/><circle cx="10.3" cy="140.2" r="1.2" fill="#b8a800"/><rect x="1.1" y="144.7" width="12.80" height="12.70" fill="#c4def6" stroke="#86bde8" stroke-width="0.5"/><path d="M2.5 146 L12.5 156 M12.5 146 L2.5 156" stroke="#fff" stroke-width="0.7"/><rect x="5.2" y="147.3" width="4.6" height="7.4" fill="#888" stroke="#555" stroke-width="0.4"/><rect x="6.2" y="148.5" width="2.6" height="5" fill="#ddd"/><path d="M4.6 148 v6 M10.4 148 v6" stroke="#d04020" stroke-width="0.5"/><path d="M2 159.1 H13" stroke="#c0c0c0" stroke-width="0.5"/><rect x="1.1" y="161.9" width="12.80" height="12.50" fill="#c4def6" stroke="#86bde8" stroke-width="0.5"/><path d="M3.2 164.5 V170 Q7.5 174 11.8 170 V164.5" fill="none" stroke="#1a8a1a" stroke-width="1.3"/><path d="M5.3 164 L9.7 168 M9.7 164 L5.3 168" stroke="#e02020" stroke-width="1"/><path d="M2 176.4 H13" stroke="#c0c0c0" stroke-width="0.5"/><rect x="1.1" y="179.2" width="12.80" height="12.20" fill="#c4def6" stroke="#86bde8" stroke-width="0.5"/><rect x="2" y="180" width="11" height="10.6" fill="#2a8a3a"/><path d="M4 184 q2 -2 4 0 t3 3 M4.5 186.5 q2.5 2 4.5 1" fill="none" stroke="#0a3a0a" stroke-width="0.8"/><rect x="2.2" y="193.3" width="10.6" height="10.2" fill="none" stroke="#9acb9a" stroke-width="0.4"/><path d="M4 196.5 q1.8 -1.8 3 0 L10.5 202" fill="none" stroke="#0a6a0a" stroke-width="0.9"/><rect x="2.2" y="206.6" width="10.6" height="10.2" fill="none" stroke="#9acb9a" stroke-width="0.4"/><path d="M3.5 210 q2 -2 4 0 t3 3 M4.5 213 q2.5 2 4.5 1" fill="none" stroke="#0a5a0a" stroke-width="0.9"/><path d="M2 220.4 H13" stroke="#c0c0c0" stroke-width="0.5"/><circle cx="7.5" cy="228.8" r="3.6" fill="#1a8a2a"/><circle cx="7.5" cy="228.8" r="1.8" fill="none" stroke="#fff" stroke-width="0.5"/><path d="M2.5 237 L12 246.5" stroke="#aaa" stroke-width="0.4"/><path d="M2.5 237 L6 240" stroke="#1a8a1a" stroke-width="1.3"/><path d="M8 242.5 L12 246.5" stroke="#e02020" stroke-width="1.3"/><circle cx="7.2" cy="241.3" r="1.6" fill="#999" stroke="#555" stroke-width="0.3"/><path d="M6 249.5 V258 M3 254 H12" stroke="#e02020" stroke-width="1.2"/><path d="M3 255.5 H12 M3 257.5 H12" stroke="#2a9a2a" stroke-width="0.6"/><path d="M10 250 L4 259" stroke="#888" stroke-width="0.4"/><path d="M3 263.8 L6 266 H9 L11.5 268.5 V272.5" fill="none" stroke="#1a8a1a" stroke-width="1"/><path d="M3 266.5 L5.5 268.5 H8 L10 270.5 V273" fill="none" stroke="#e02020" stroke-width="0.8"/><path d="M2 275.6 H13" stroke="#c0c0c0" stroke-width="0.5"/><rect x="1.1" y="279" width="12.80" height="12.10" fill="#c4def6" stroke="#86bde8" stroke-width="0.5"/><path d="M2.5 282 Q7 278.5 12 283 V285 H2.5Z" fill="#2a9a2a"/><rect x="2.5" y="285" width="9.5" height="2.5" fill="#2040c0"/><rect x="2.5" y="287.5" width="9.5" height="2" fill="#c8b000"/><circle cx="7.3" cy="285" r="1.8" fill="#fff" stroke="#c02020" stroke-width="0.7"/><path d="M3.5 302.5 V294.5 L7 299 L10.5 294.5 V302.5" fill="none" stroke="#e02020" stroke-width="1.3"/><path d="M7 298 L12 302.6" stroke="#fff" stroke-width="0.9"/><path d="M7 298 L12 302.6" stroke="#666" stroke-width="0.3"/><path d="M2 306 H13" stroke="#c0c0c0" stroke-width="0.5"/><rect x="675.8" y="48.1" width="12.30" height="13.50" fill="#c4def6" stroke="#86bde8" stroke-width="0.5"/><path d="M680.2 50.8 V58.2 L681.8 56.7 L683 59.2 L684 58.8 L682.9 56.3 L685 56.2 Z" fill="#ececec" stroke="#777" stroke-width="0.45"/><path d="M677 63.4 H687" stroke="#c0c0c0" stroke-width="0.5"/><path d="M679.6 66.7 V75.6" stroke="#e02020" stroke-width="1.1"/><path d="M677 69.2 H687" stroke="#1a8a1a" stroke-width="1"/><path d="M681.5 70 v5 l1 -1 l0.8 1.6 l0.6 -0.3 l-0.8 -1.5 h1.4z" fill="#eee" stroke="#555" stroke-width="0.3"/><path d="M678 81 L686.5 89.5 M686.5 81 L678 89.5" stroke="#ccc" stroke-width="0.5"/><circle cx="680" cy="83" r="0.9" fill="#c8b800"/><path d="M682 84 v5 l1 -1 l0.8 1.6 l0.6 -0.3 l-0.8 -1.5 h1.4z" fill="#eee" stroke="#888" stroke-width="0.3"/><path d="M677 92.9 H687" stroke="#c0c0c0" stroke-width="0.5"/><rect x="677.4" y="97.0" width="1.8" height="2.4" fill="#1a8a1a"/><rect x="680.0" y="97.0" width="1.8" height="2.4" fill="#1a8a1a"/><rect x="682.6" y="97.0" width="1.8" height="2.4" fill="#1a8a1a"/><rect x="685.2" y="97.0" width="1.8" height="2.4" fill="#1a8a1a"/><rect x="677.4" y="103.6" width="1.8" height="2.4" fill="#1a8a1a"/><rect x="680.0" y="103.6" width="1.8" height="2.4" fill="#1a8a1a"/><rect x="682.6" y="103.6" width="1.8" height="2.4" fill="#1a8a1a"/><rect x="685.2" y="103.6" width="1.8" height="2.4" fill="#1a8a1a"/><rect x="677.5" y="100" width="9.5" height="3" fill="#fff"/><path d="M677.5 110.5 L680.5 113.5 H683 L686.5 119" fill="none" stroke="#0a7a0a" stroke-width="0.9"/><rect x="676.8" y="122.5" width="10.6" height="11.6" fill="#2a8a3a"/><circle cx="680.5" cy="127" r="1.6" fill="none" stroke="#ddd" stroke-width="0.7"/><path d="M682 127.5 q2 0 3 3" fill="none" stroke="#ddd" stroke-width="0.8"/><rect x="677" y="136" width="10.2" height="10" fill="#f4f4f4" stroke="#2a8a3a" stroke-width="0.8"/><circle cx="682.1" cy="141" r="2.9" fill="none" stroke="#e02020" stroke-width="0.9"/><path d="M680.2 142.9 L684 139.1" stroke="#e02020" stroke-width="0.9"/><path d="M677 150.4 H687" stroke="#c0c0c0" stroke-width="0.5"/><path d="M677.3 162.6 L686.8 154" stroke="#1a30b0" stroke-width="1.1" stroke-dasharray="1.8 0.5"/><circle cx="682" cy="171.5" r="4.6" fill="none" stroke="#1a30b0" stroke-width="0.8"/><circle cx="682" cy="171.5" r="0.8" fill="#1a8a1a"/><circle cx="685.3" cy="168.4" r="0.7" fill="#1a8a1a"/><path d="M678 181 Q684.5 182 686 188.8" fill="none" stroke="#1a30b0" stroke-width="0.8"/><circle cx="678" cy="181" r="0.7" fill="#1a8a1a"/><circle cx="686" cy="189" r="0.7" fill="#1a8a1a"/><circle cx="678" cy="189" r="0.7" fill="#1a8a1a"/><text x="682" y="202.6" font-family="Liberation Serif" font-weight="bold" font-size="10.5" text-anchor="middle" fill="#111">T</text><path d="M677 206 H687" stroke="#c0c0c0" stroke-width="0.5"/><path d="M677.5 215.5 H686.5 M677.5 213 V218.5 M686.5 213 V218.5" stroke="#222" stroke-width="0.5"/><text x="680.6" y="213.5" font-family="Liberation Sans" font-size="3.5" fill="#222">N</text><path d="M682 225 L685.3 228.1 L682 231.2 L678.7 228.1 Z" fill="#e8c000" stroke="#111" stroke-width="0.6"/><path d="M680 229.5 L684 226.7" stroke="#111" stroke-width="0.8"/><path d="M677 235.5 H687" stroke="#c0c0c0" stroke-width="0.5"/><path d="M679.3 243 V249.3 H684.7 V243" fill="#e0e0e0" stroke="#999" stroke-width="0.4"/><ellipse cx="682" cy="242.6" rx="2.9" ry="1" fill="#f0f0f0" stroke="#999" stroke-width="0.4"/><path d="M677 253.2 H687" stroke="#c0c0c0" stroke-width="0.5"/><path d="M677.8 257.5 V266.5 H687" fill="none" stroke="#222" stroke-width="0.5"/><path d="M683 258 L686.2 261.1 L683 264.3 L679.8 261.1 Z" fill="#d8b800" stroke="#111" stroke-width="0.6"/><path d="M678.5 270.4 V280.2" stroke="#555" stroke-width="0.5" stroke-dasharray="1.2 0.8"/><path d="M681 270.4 V280.2" stroke="#555" stroke-width="0.5" stroke-dasharray="1.2 0.8"/><path d="M683.5 270.4 V280.2" stroke="#555" stroke-width="0.5" stroke-dasharray="1.2 0.8"/><path d="M686 270.4 V280.2" stroke="#555" stroke-width="0.5" stroke-dasharray="1.2 0.8"/><path d="M677.5 275.5 H686.8" stroke="#333" stroke-width="0.6"/><circle cx="680.5" cy="275.5" r="0.9" fill="#e02020"/><rect x="152.6" y="106.3" width="380" height="262.2" fill="none" stroke="#bab200" stroke-width="1"/><rect x="152.6" y="106.3" width="380" height="262.2" fill="none" stroke="#6a8a30" stroke-width="1" stroke-dasharray="0.8 2.2" opacity="0.7"/><rect x="155.8" y="109" width="374.2" height="257" fill="#7d7200"/><rect x="155.8" y="109" width="374.2" height="257" fill="none" stroke="#a09800" stroke-width="0.5"/><path d="M418.30 151.00 L445.50 151.00 L449.20 155.50 L449.20 190.00 L425.00 190.00 L425.00 195.30 L418.30 195.30 Z" fill="#007000" /><path d="M418.30 195.30 L465.80 195.30 L465.80 189.40 L504.20 189.40 L504.20 212.50 L495.30 221.40 L495.30 223.80 L418.30 223.80 Z" fill="#9c0000" /><rect x="425.6" y="198.4" width="23.3" height="25.4" fill="#000"/><path d="M425.60 223.80 L448.90 223.80 L448.90 249.50 L457.80 258.40 L467.00 258.40 L467.00 272.50 L449.50 272.50 L425.60 248.60 Z" fill="#007000" /><path d="M419 221.3 H495" stroke="#d03030" stroke-width="0.5" opacity="0.6"/><path d="M254.20 136.50 L264.30 136.50 L279.40 151.60 L279.40 184.50 L293.30 198.90 L299.50 198.90" fill="none" stroke="#3c4200" stroke-width="6.10" stroke-linejoin="round" stroke-linecap="round"/><path d="M254.20 136.50 L264.30 136.50 L279.40 151.60 L279.40 184.50 L293.30 198.90 L299.50 198.90" fill="none" stroke="#007000" stroke-width="5.4" stroke-linejoin="round" stroke-linecap="round"/><path d="M254.20 136.50 L264.30 136.50 L279.40 151.60 L279.40 184.50 L293.30 198.90 L299.50 198.90" fill="none" stroke="#7d7200" stroke-width="0.9" stroke-linejoin="round" opacity="0.25"/><path d="M209.00 151.30 L213.30 155.60 L213.30 173.40 L251.20 173.40 L287.20 210.00 L299.50 210.00" fill="none" stroke="#3c4200" stroke-width="6.10" stroke-linejoin="round" stroke-linecap="round"/><path d="M209.00 151.30 L213.30 155.60 L213.30 173.40 L251.20 173.40 L287.20 210.00 L299.50 210.00" fill="none" stroke="#007000" stroke-width="5.4" stroke-linejoin="round" stroke-linecap="round"/><path d="M209.00 151.30 L213.30 155.60 L213.30 173.40 L251.20 173.40 L287.20 210.00 L299.50 210.00" fill="none" stroke="#7d7200" stroke-width="0.9" stroke-linejoin="round" opacity="0.25"/><path d="M226.00 203.60 L240.50 203.60" fill="none" stroke="#3c4200" stroke-width="6.10" stroke-linejoin="round" stroke-linecap="round"/><path d="M226.00 203.60 L240.50 203.60" fill="none" stroke="#007000" stroke-width="5.4" stroke-linejoin="round" stroke-linecap="round"/><path d="M259.80 204.50 L271.50 216.20 L271.50 227.00 L275.80 232.20 L299.50 232.20" fill="none" stroke="#3c4200" stroke-width="6.50" stroke-linejoin="round" stroke-linecap="round"/><path d="M259.80 204.50 L271.50 216.20 L271.50 227.00 L275.80 232.20 L299.50 232.20" fill="none" stroke="#007000" stroke-width="5.8" stroke-linejoin="round" stroke-linecap="round"/><path d="M259.80 204.50 L271.50 216.20 L271.50 227.00 L275.80 232.20 L299.50 232.20" fill="none" stroke="#7d7200" stroke-width="1.74" stroke-linejoin="round"/><path d="M226.00 243.30 L299.50 243.30" fill="none" stroke="#3c4200" stroke-width="6.10" stroke-linejoin="round" stroke-linecap="round"/><path d="M226.00 243.30 L299.50 243.30" fill="none" stroke="#007000" stroke-width="5.4" stroke-linejoin="round" stroke-linecap="round"/><path d="M226.00 243.30 L299.50 243.30" fill="none" stroke="#7d7200" stroke-width="0.9" stroke-linejoin="round" opacity="0.3"/><path d="M188.30 216.80 L201.00 216.80 L204.60 220.40 L204.60 239.40 L220.20 255.00 L299.50 255.00" fill="none" stroke="#3c4200" stroke-width="6.30" stroke-linejoin="round" stroke-linecap="round"/><path d="M188.30 216.80 L201.00 216.80 L204.60 220.40 L204.60 239.40 L220.20 255.00 L299.50 255.00" fill="none" stroke="#007000" stroke-width="5.6" stroke-linejoin="round" stroke-linecap="round"/><path d="M188.30 216.80 L201.00 216.80 L204.60 220.40 L204.60 239.40 L220.20 255.00 L299.50 255.00" fill="none" stroke="#7d7200" stroke-width="1.68" stroke-linejoin="round"/><path d="M188.30 238.40 L198.00 248.10 L198.00 253.00 L211.20 266.20 L299.50 266.20" fill="none" stroke="#3c4200" stroke-width="6.10" stroke-linejoin="round" stroke-linecap="round"/><path d="M188.30 238.40 L198.00 248.10 L198.00 253.00 L211.20 266.20 L299.50 266.20" fill="none" stroke="#007000" stroke-width="5.4" stroke-linejoin="round" stroke-linecap="round"/><path d="M188.30 238.40 L198.00 248.10 L198.00 253.00 L211.20 266.20 L299.50 266.20" fill="none" stroke="#7d7200" stroke-width="0.9" stroke-linejoin="round" opacity="0.4"/><path d="M188.30 260.40 L204.50 277.00 L299.50 277.30" fill="none" stroke="#3c4200" stroke-width="6.10" stroke-linejoin="round" stroke-linecap="round"/><path d="M188.30 260.40 L204.50 277.00 L299.50 277.30" fill="none" stroke="#007000" stroke-width="5.4" stroke-linejoin="round" stroke-linecap="round"/><path d="M188.30 260.40 L204.50 277.00 L299.50 277.30" fill="none" stroke="#7d7200" stroke-width="0.9" stroke-linejoin="round" opacity="0.1"/><path d="M188.30 336.50 L211.00 336.50 L217.50 330.00 L217.50 309.00 L228.00 299.00 L299.50 299.00" fill="none" stroke="#3c4200" stroke-width="6.10" stroke-linejoin="round" stroke-linecap="round"/><path d="M188.30 336.50 L211.00 336.50 L217.50 330.00 L217.50 309.00 L228.00 299.00 L299.50 299.00" fill="none" stroke="#007000" stroke-width="5.4" stroke-linejoin="round" stroke-linecap="round"/><path d="M188.30 336.50 L211.00 336.50 L217.50 330.00 L217.50 309.00 L228.00 299.00 L299.50 299.00" fill="none" stroke="#7d7200" stroke-width="0.9" stroke-linejoin="round" opacity="0.15"/><path d="M412.40 143.30 L485.50 143.30 L490.90 148.70 L490.90 183.80" fill="none" stroke="#3c4200" stroke-width="4.70" stroke-linejoin="round" stroke-linecap="round"/><path d="M412.40 143.30 L485.50 143.30 L490.90 148.70 L490.90 183.80" fill="none" stroke="#007000" stroke-width="4.0" stroke-linejoin="round" stroke-linecap="round"/><path d="M412.40 143.30 L485.50 143.30 L490.90 148.70 L490.90 183.80" fill="none" stroke="#7d7200" stroke-width="0.9" stroke-linejoin="round" opacity="0.2"/><path d="M412.40 254.50 L419.00 254.50 L427.10 262.00 L427.10 271.50 L445.90 290.40 L445.90 292.00" fill="none" stroke="#3c4200" stroke-width="5.90" stroke-linejoin="round" stroke-linecap="round"/><path d="M412.40 254.50 L419.00 254.50 L427.10 262.00 L427.10 271.50 L445.90 290.40 L445.90 292.00" fill="none" stroke="#007000" stroke-width="5.2" stroke-linejoin="round" stroke-linecap="round"/><path d="M412.40 254.50 L419.00 254.50 L427.10 262.00 L427.10 271.50 L445.90 290.40 L445.90 292.00" fill="none" stroke="#7d7200" stroke-width="1.56" stroke-linejoin="round"/><path d="M412.40 276.90 L419.00 276.90 L424.90 283.00 L424.90 299.20 L449.00 323.50 L466.00 323.50" fill="none" stroke="#3c4200" stroke-width="5.90" stroke-linejoin="round" stroke-linecap="round"/><path d="M412.40 276.90 L419.00 276.90 L424.90 283.00 L424.90 299.20 L449.00 323.50 L466.00 323.50" fill="none" stroke="#007000" stroke-width="5.2" stroke-linejoin="round" stroke-linecap="round"/><path d="M412.40 276.90 L419.00 276.90 L424.90 283.00 L424.90 299.20 L449.00 323.50 L466.00 323.50" fill="none" stroke="#7d7200" stroke-width="1.56" stroke-linejoin="round"/><path d="M472.00 293.30 L489.10 293.30" fill="none" stroke="#3c4200" stroke-width="5.30" stroke-linejoin="round" stroke-linecap="round"/><path d="M472.00 293.30 L489.10 293.30" fill="none" stroke="#007000" stroke-width="4.6" stroke-linejoin="round" stroke-linecap="round"/><path d="M472.00 293.30 L489.10 293.30" fill="none" stroke="#7d7200" stroke-width="0.9" stroke-linejoin="round" opacity="0.2"/><path d="M468.00 322.00 L468.00 356.00" fill="none" stroke="#3c4200" stroke-width="5.10" stroke-linejoin="round" stroke-linecap="round"/><path d="M468.00 322.00 L468.00 356.00" fill="none" stroke="#007000" stroke-width="4.4" stroke-linejoin="round" stroke-linecap="round"/><rect x="172.4" y="122.5" width="38.60" height="29.50" fill="none" stroke="#8e8e92" stroke-width="0.5"/><path d="M205.6 123 V151.5" stroke="#8e8e92" stroke-width="0.5"/><rect x="228" y="122" width="30.30" height="29.30" fill="none" stroke="#8e8e92" stroke-width="0.5"/><circle cx="243.1" cy="136.5" r="4" fill="none" stroke="#cfc200" stroke-width="0.6"/><rect x="172.2" y="206.3" width="32.40" height="65.20" fill="none" stroke="#8e8e92" stroke-width="0.5"/><rect x="172.1" y="281.5" width="33.10" height="66.10" fill="none" stroke="#8e8e92" stroke-width="0.5"/><rect x="293.7" y="121.2" width="124.90" height="225.80" fill="none" stroke="#8e8e92" stroke-width="0.5"/><rect x="484.6" y="286.8" width="42.80" height="11.80" fill="none" stroke="#8e8e92" stroke-width="0.5"/><rect x="196.00" y="169.20" width="21.20" height="8.00" rx="1.2" fill="#7d7200" stroke="#007000" stroke-width="1.1"/><rect x="197.60" y="170.60" width="18.00" height="5.20" fill="none" stroke="#007000" stroke-width="0.6" opacity="0.8"/><rect x="203.91" y="171.00" width="5.38" height="4.40" fill="#007000"/><path d="M198.40 175.20 l1.5 -2 l1.5 2 M212.80 175.20 v-2.6 h1.2 q1 0 1 1 t-1 1 h-1.2" fill="none" stroke="#d8d4a0" stroke-width="0.5"/><rect x="220.80" y="180.20" width="9.70" height="28.60" rx="1.2" fill="#7d7200" stroke="#007000" stroke-width="1.1"/><rect x="222.20" y="181.80" width="6.90" height="25.40" fill="none" stroke="#007000" stroke-width="0.6" opacity="0.8"/><rect x="222.60" y="193.01" width="6.10" height="2.98" fill="#007000"/><path d="M225.65 182.60 v10.43 M224.45 198.08 h2.4 M225.65 196.88 v8.94" fill="none" stroke="#d8d4a0" stroke-width="0.5" opacity="0.8"/><rect x="221.00" y="218.30" width="9.50" height="28.10" rx="1.2" fill="#7d7200" stroke="#007000" stroke-width="1.1"/><rect x="222.40" y="219.90" width="6.70" height="24.90" fill="none" stroke="#007000" stroke-width="0.6" opacity="0.8"/><rect x="222.80" y="230.88" width="5.90" height="2.93" fill="#007000"/><path d="M225.75 220.70 v10.26 M224.55 235.87 h2.4 M225.75 234.69 v8.79" fill="none" stroke="#d8d4a0" stroke-width="0.5" opacity="0.8"/><rect x="240.40" y="198.80" width="19.20" height="8.80" rx="1.2" fill="#7d7200" stroke="#007000" stroke-width="1.1"/><rect x="242.00" y="200.20" width="16.00" height="6.00" fill="none" stroke="#007000" stroke-width="0.6" opacity="0.8"/><rect x="247.55" y="200.60" width="4.90" height="5.20" fill="#007000"/><path d="M242.80 205.60 l1.5 -2 l1.5 2 M255.20 205.60 v-2.6 h1.2 q1 0 1 1 t-1 1 h-1.2" fill="none" stroke="#d8d4a0" stroke-width="0.5"/><rect x="240.60" y="237.80" width="20.00" height="8.90" rx="1.2" fill="#7d7200" stroke="#007000" stroke-width="1.1"/><rect x="242.20" y="239.20" width="16.80" height="6.10" fill="none" stroke="#007000" stroke-width="0.6" opacity="0.8"/><rect x="248.06" y="239.60" width="5.09" height="5.30" fill="#007000"/><path d="M243.00 244.70 l1.5 -2 l1.5 2 M256.20 244.70 v-2.6 h1.2 q1 0 1 1 t-1 1 h-1.2" fill="none" stroke="#d8d4a0" stroke-width="0.5"/><rect x="450.20" y="289.30" width="20.90" height="8.00" rx="1.2" fill="#7d7200" stroke="#007000" stroke-width="1.1"/><rect x="451.80" y="290.70" width="17.70" height="5.20" fill="none" stroke="#007000" stroke-width="0.6" opacity="0.8"/><rect x="458.00" y="291.10" width="5.30" height="4.40" fill="#007000"/><path d="M452.60 295.30 l1.5 -2 l1.5 2 M466.70 295.30 v-2.6 h1.2 q1 0 1 1 t-1 1 h-1.2" fill="none" stroke="#d8d4a0" stroke-width="0.5"/><rect x="465.20" y="308.60" width="6.60" height="18.50" rx="1.2" fill="#7d7200" stroke="#007000" stroke-width="1.1"/><rect x="466.60" y="310.20" width="3.80" height="15.30" fill="none" stroke="#007000" stroke-width="0.6" opacity="0.8"/><rect x="467.00" y="316.87" width="3.00" height="1.97" fill="#007000"/><path d="M468.50 311.00 v6.89 M467.30 320.21 h2.4 M468.50 319.43 v5.91" fill="none" stroke="#d8d4a0" stroke-width="0.5" opacity="0.8"/><circle cx="177.60" cy="123.30" r="6.4" fill="#000" stroke="#9a9010" stroke-width="0.35"/><path d="M180.57 126.27 L181.98 127.68" stroke="#007000" stroke-width="2.69"/><path d="M180.57 120.33 L181.98 118.92" stroke="#007000" stroke-width="2.69"/><path d="M174.63 126.27 L173.22 127.68" stroke="#007000" stroke-width="2.69"/><path d="M174.63 120.33 L173.22 118.92" stroke="#007000" stroke-width="2.69"/><circle cx="177.60" cy="123.30" r="4.2" fill="none" stroke="#cfc200" stroke-width="0.95"/><circle cx="177.40" cy="122.60" r="0.6" fill="#e8e8e8"/><circle cx="206.00" cy="123.30" r="6.4" fill="#000" stroke="#9a9010" stroke-width="0.35"/><circle cx="206.00" cy="123.30" r="4.2" fill="none" stroke="#cfc200" stroke-width="0.95"/><circle cx="205.80" cy="122.60" r="0.6" fill="#e8e8e8"/><circle cx="177.60" cy="151.30" r="6.4" fill="#000" stroke="#9a9010" stroke-width="0.35"/><path d="M180.57 154.27 L181.98 155.68" stroke="#007000" stroke-width="2.69"/><path d="M180.57 148.33 L181.98 146.92" stroke="#007000" stroke-width="2.69"/><path d="M174.63 154.27 L173.22 155.68" stroke="#007000" stroke-width="2.69"/><path d="M174.63 148.33 L173.22 146.92" stroke="#007000" stroke-width="2.69"/><circle cx="177.60" cy="151.30" r="4.2" fill="none" stroke="#cfc200" stroke-width="0.95"/><circle cx="177.40" cy="150.60" r="0.6" fill="#e8e8e8"/><circle cx="206.00" cy="151.30" r="6.4" fill="#000" stroke="#9a9010" stroke-width="0.35"/><circle cx="206.00" cy="151.30" r="4.2" fill="none" stroke="#cfc200" stroke-width="0.95"/><circle cx="205.80" cy="150.60" r="0.6" fill="#e8e8e8"/><circle cx="232.10" cy="125.10" r="5.0" fill="#000" stroke="#9a9010" stroke-width="0.35"/><path d="M234.36 127.36 L235.49 128.49" stroke="#007000" stroke-width="2.10"/><path d="M234.36 122.84 L235.49 121.71" stroke="#007000" stroke-width="2.10"/><path d="M229.84 127.36 L228.71 128.49" stroke="#007000" stroke-width="2.10"/><path d="M229.84 122.84 L228.71 121.71" stroke="#007000" stroke-width="2.10"/><circle cx="232.10" cy="125.10" r="3.2" fill="none" stroke="#cfc200" stroke-width="0.95"/><circle cx="231.90" cy="124.40" r="0.6" fill="#e8e8e8"/><circle cx="232.10" cy="147.20" r="5.0" fill="#000" stroke="#9a9010" stroke-width="0.35"/><path d="M234.36 149.46 L235.49 150.59" stroke="#c01010" stroke-width="2.10"/><path d="M234.36 144.94 L235.49 143.81" stroke="#c01010" stroke-width="2.10"/><path d="M229.84 149.46 L228.71 150.59" stroke="#c01010" stroke-width="2.10"/><path d="M229.84 144.94 L228.71 143.81" stroke="#c01010" stroke-width="2.10"/><circle cx="232.10" cy="147.20" r="3.2" fill="none" stroke="#cfc200" stroke-width="0.95"/><circle cx="231.90" cy="146.50" r="0.6" fill="#e8e8e8"/><circle cx="254.20" cy="136.50" r="5.5" fill="#000" stroke="#9a9010" stroke-width="0.35"/><circle cx="254.20" cy="136.50" r="3.6" fill="none" stroke="#cfc200" stroke-width="0.95"/><circle cx="254.00" cy="135.80" r="0.6" fill="#e8e8e8"/><circle cx="188.40" cy="216.80" r="6.7" fill="#000" stroke="#9a9010" stroke-width="0.35"/><circle cx="188.40" cy="216.80" r="4.6" fill="none" stroke="#cfc200" stroke-width="0.95"/><circle cx="188.20" cy="216.10" r="0.6" fill="#e8e8e8"/><circle cx="188.40" cy="238.60" r="6.7" fill="#000" stroke="#9a9010" stroke-width="0.35"/><circle cx="188.40" cy="238.60" r="4.6" fill="none" stroke="#cfc200" stroke-width="0.95"/><circle cx="188.20" cy="237.90" r="0.6" fill="#e8e8e8"/><circle cx="188.40" cy="260.40" r="6.7" fill="#000" stroke="#9a9010" stroke-width="0.35"/><circle cx="188.40" cy="260.40" r="4.6" fill="none" stroke="#cfc200" stroke-width="0.95"/><circle cx="188.20" cy="259.70" r="0.6" fill="#e8e8e8"/><circle cx="188.30" cy="293.30" r="6.4" fill="#000" stroke="#9a9010" stroke-width="0.35"/><path d="M191.34 296.34 L192.68 297.68" stroke="#c01010" stroke-width="2.69"/><path d="M191.34 290.26 L192.68 288.92" stroke="#c01010" stroke-width="2.69"/><path d="M185.26 296.34 L183.92 297.68" stroke="#c01010" stroke-width="2.69"/><path d="M185.26 290.26 L183.92 288.92" stroke="#c01010" stroke-width="2.69"/><circle cx="188.30" cy="293.30" r="4.3" fill="none" stroke="#cfc200" stroke-width="0.95"/><circle cx="188.10" cy="292.60" r="0.6" fill="#e8e8e8"/><circle cx="188.30" cy="314.60" r="6.4" fill="#000" stroke="#9a9010" stroke-width="0.35"/><path d="M191.34 317.64 L192.68 318.98" stroke="#007000" stroke-width="2.69"/><path d="M191.34 311.56 L192.68 310.22" stroke="#007000" stroke-width="2.69"/><path d="M185.26 317.64 L183.92 318.98" stroke="#007000" stroke-width="2.69"/><path d="M185.26 311.56 L183.92 310.22" stroke="#007000" stroke-width="2.69"/><circle cx="188.30" cy="314.60" r="4.3" fill="none" stroke="#cfc200" stroke-width="0.95"/><circle cx="188.10" cy="313.90" r="0.6" fill="#e8e8e8"/><circle cx="188.30" cy="336.40" r="6.4" fill="#000" stroke="#9a9010" stroke-width="0.35"/><circle cx="188.30" cy="336.40" r="4.3" fill="none" stroke="#cfc200" stroke-width="0.95"/><circle cx="188.10" cy="335.70" r="0.6" fill="#e8e8e8"/><rect x="293.7" y="137.6" width="11.6" height="168" fill="none" stroke="#b8ac00" stroke-width="0.6"/><rect x="294.4" y="138.4" width="10.2" height="166.4" rx="4" fill="#000"/><rect x="406.59999999999997" y="137.6" width="11.6" height="168" fill="none" stroke="#b8ac00" stroke-width="0.6"/><rect x="407.29999999999995" y="138.4" width="10.2" height="166.4" rx="4" fill="#000"/><circle cx="299.50" cy="143.30" r="5.4" fill="#000" stroke="#9a9010" stroke-width="0.35"/><rect x="295.85" y="139.65" width="7.3" height="7.3" fill="none" stroke="#cfc200" stroke-width="1.4"/><circle cx="299.30" cy="142.60" r="0.6" fill="#e8e8e8"/><circle cx="412.40" cy="143.30" r="5.4" fill="#000" stroke="#9a9010" stroke-width="0.35"/><rect x="408.75" y="139.65" width="7.3" height="7.3" fill="none" stroke="#cfc200" stroke-width="1.4"/><circle cx="412.20" cy="142.60" r="0.6" fill="#e8e8e8"/><circle cx="299.50" cy="154.42" r="5.4" fill="#000" stroke="#9a9010" stroke-width="0.35"/><circle cx="299.50" cy="154.42" r="3.9" fill="none" stroke="#cfc200" stroke-width="1.4"/><circle cx="299.30" cy="153.72" r="0.6" fill="#e8e8e8"/><circle cx="412.40" cy="154.42" r="5.4" fill="#000" stroke="#9a9010" stroke-width="0.35"/><circle cx="412.40" cy="154.42" r="3.9" fill="none" stroke="#cfc200" stroke-width="1.4"/><circle cx="412.20" cy="153.72" r="0.6" fill="#e8e8e8"/><circle cx="299.50" cy="165.54" r="5.4" fill="#000" stroke="#9a9010" stroke-width="0.35"/><circle cx="299.50" cy="165.54" r="3.9" fill="none" stroke="#cfc200" stroke-width="1.4"/><circle cx="299.30" cy="164.84" r="0.6" fill="#e8e8e8"/><circle cx="412.40" cy="165.54" r="5.4" fill="#000" stroke="#9a9010" stroke-width="0.35"/><circle cx="412.40" cy="165.54" r="3.9" fill="none" stroke="#cfc200" stroke-width="1.4"/><circle cx="412.20" cy="164.84" r="0.6" fill="#e8e8e8"/><circle cx="299.50" cy="176.66" r="5.4" fill="#000" stroke="#9a9010" stroke-width="0.35"/><circle cx="299.50" cy="176.66" r="3.9" fill="none" stroke="#cfc200" stroke-width="1.4"/><circle cx="299.30" cy="175.96" r="0.6" fill="#e8e8e8"/><circle cx="412.40" cy="176.66" r="5.4" fill="#000" stroke="#9a9010" stroke-width="0.35"/><circle cx="412.40" cy="176.66" r="3.9" fill="none" stroke="#cfc200" stroke-width="1.4"/><circle cx="412.20" cy="175.96" r="0.6" fill="#e8e8e8"/><circle cx="299.50" cy="187.78" r="5.4" fill="#000" stroke="#9a9010" stroke-width="0.35"/><circle cx="299.50" cy="187.78" r="3.9" fill="none" stroke="#cfc200" stroke-width="1.4"/><circle cx="299.30" cy="187.08" r="0.6" fill="#e8e8e8"/><circle cx="412.40" cy="187.78" r="5.4" fill="#000" stroke="#9a9010" stroke-width="0.35"/><circle cx="412.40" cy="187.78" r="3.9" fill="none" stroke="#cfc200" stroke-width="1.4"/><circle cx="412.20" cy="187.08" r="0.6" fill="#e8e8e8"/><circle cx="299.50" cy="198.90" r="5.4" fill="#000" stroke="#9a9010" stroke-width="0.35"/><circle cx="299.50" cy="198.90" r="3.9" fill="none" stroke="#cfc200" stroke-width="1.4"/><circle cx="299.30" cy="198.20" r="0.6" fill="#e8e8e8"/><circle cx="412.40" cy="198.90" r="5.4" fill="#000" stroke="#9a9010" stroke-width="0.35"/><circle cx="412.40" cy="198.90" r="3.9" fill="none" stroke="#cfc200" stroke-width="1.4"/><circle cx="412.20" cy="198.20" r="0.6" fill="#e8e8e8"/><circle cx="299.50" cy="210.02" r="5.4" fill="#000" stroke="#9a9010" stroke-width="0.35"/><circle cx="299.50" cy="210.02" r="3.9" fill="none" stroke="#cfc200" stroke-width="1.4"/><circle cx="299.30" cy="209.32" r="0.6" fill="#e8e8e8"/><circle cx="412.40" cy="210.02" r="5.4" fill="#000" stroke="#9a9010" stroke-width="0.35"/><circle cx="412.40" cy="210.02" r="3.9" fill="none" stroke="#cfc200" stroke-width="1.4"/><circle cx="412.20" cy="209.32" r="0.6" fill="#e8e8e8"/><circle cx="299.50" cy="221.14" r="5.4" fill="#000" stroke="#9a9010" stroke-width="0.35"/><circle cx="299.50" cy="221.14" r="3.9" fill="none" stroke="#cfc200" stroke-width="1.4"/><circle cx="299.30" cy="220.44" r="0.6" fill="#e8e8e8"/><circle cx="412.40" cy="221.14" r="5.4" fill="#000" stroke="#9a9010" stroke-width="0.35"/><circle cx="412.40" cy="221.14" r="3.9" fill="none" stroke="#cfc200" stroke-width="1.4"/><circle cx="412.20" cy="220.44" r="0.6" fill="#e8e8e8"/><circle cx="299.50" cy="232.26" r="5.4" fill="#000" stroke="#9a9010" stroke-width="0.35"/><circle cx="299.50" cy="232.26" r="3.9" fill="none" stroke="#cfc200" stroke-width="1.4"/><circle cx="299.30" cy="231.56" r="0.6" fill="#e8e8e8"/><circle cx="412.40" cy="232.26" r="5.4" fill="#000" stroke="#9a9010" stroke-width="0.35"/><circle cx="412.40" cy="232.26" r="3.9" fill="none" stroke="#cfc200" stroke-width="1.4"/><circle cx="412.20" cy="231.56" r="0.6" fill="#e8e8e8"/><circle cx="299.50" cy="243.38" r="5.4" fill="#000" stroke="#9a9010" stroke-width="0.35"/><circle cx="299.50" cy="243.38" r="3.9" fill="none" stroke="#cfc200" stroke-width="1.4"/><circle cx="299.30" cy="242.68" r="0.6" fill="#e8e8e8"/><circle cx="412.40" cy="243.38" r="5.4" fill="#000" stroke="#9a9010" stroke-width="0.35"/><circle cx="412.40" cy="243.38" r="3.9" fill="none" stroke="#cfc200" stroke-width="1.4"/><circle cx="412.20" cy="242.68" r="0.6" fill="#e8e8e8"/><circle cx="299.50" cy="254.50" r="5.4" fill="#000" stroke="#9a9010" stroke-width="0.35"/><circle cx="299.50" cy="254.50" r="3.9" fill="none" stroke="#cfc200" stroke-width="1.4"/><circle cx="299.30" cy="253.80" r="0.6" fill="#e8e8e8"/><circle cx="412.40" cy="254.50" r="5.4" fill="#000" stroke="#9a9010" stroke-width="0.35"/><circle cx="412.40" cy="254.50" r="3.9" fill="none" stroke="#cfc200" stroke-width="1.4"/><circle cx="412.20" cy="253.80" r="0.6" fill="#e8e8e8"/><circle cx="299.50" cy="265.62" r="5.4" fill="#000" stroke="#9a9010" stroke-width="0.35"/><circle cx="299.50" cy="265.62" r="3.9" fill="none" stroke="#cfc200" stroke-width="1.4"/><circle cx="299.30" cy="264.92" r="0.6" fill="#e8e8e8"/><circle cx="412.40" cy="265.62" r="5.4" fill="#000" stroke="#9a9010" stroke-width="0.35"/><circle cx="412.40" cy="265.62" r="3.9" fill="none" stroke="#cfc200" stroke-width="1.4"/><circle cx="412.20" cy="264.92" r="0.6" fill="#e8e8e8"/><circle cx="299.50" cy="276.74" r="5.4" fill="#000" stroke="#9a9010" stroke-width="0.35"/><circle cx="299.50" cy="276.74" r="3.9" fill="none" stroke="#cfc200" stroke-width="1.4"/><circle cx="299.30" cy="276.04" r="0.6" fill="#e8e8e8"/><circle cx="412.40" cy="276.74" r="5.4" fill="#000" stroke="#9a9010" stroke-width="0.35"/><circle cx="412.40" cy="276.74" r="3.9" fill="none" stroke="#cfc200" stroke-width="1.4"/><circle cx="412.20" cy="276.04" r="0.6" fill="#e8e8e8"/><circle cx="299.50" cy="287.86" r="5.4" fill="#000" stroke="#9a9010" stroke-width="0.35"/><circle cx="299.50" cy="287.86" r="3.9" fill="none" stroke="#cfc200" stroke-width="1.4"/><circle cx="299.30" cy="287.16" r="0.6" fill="#e8e8e8"/><circle cx="412.40" cy="287.86" r="5.4" fill="#000" stroke="#9a9010" stroke-width="0.35"/><path d="M415.16 290.62 L416.08 291.54" stroke="#c01010" stroke-width="2.27"/><path d="M415.16 285.10 L416.08 284.18" stroke="#c01010" stroke-width="2.27"/><path d="M409.64 290.62 L408.72 291.54" stroke="#c01010" stroke-width="2.27"/><path d="M409.64 285.10 L408.72 284.18" stroke="#c01010" stroke-width="2.27"/><circle cx="412.40" cy="287.86" r="3.9" fill="none" stroke="#cfc200" stroke-width="1.4"/><circle cx="412.20" cy="287.16" r="0.6" fill="#e8e8e8"/><circle cx="299.50" cy="298.98" r="5.4" fill="#000" stroke="#9a9010" stroke-width="0.35"/><circle cx="299.50" cy="298.98" r="3.9" fill="none" stroke="#cfc200" stroke-width="1.4"/><circle cx="299.30" cy="298.28" r="0.6" fill="#e8e8e8"/><circle cx="412.40" cy="298.98" r="5.4" fill="#000" stroke="#9a9010" stroke-width="0.35"/><path d="M415.16 301.74 L416.08 302.66" stroke="#007000" stroke-width="2.27"/><path d="M415.16 296.22 L416.08 295.30" stroke="#007000" stroke-width="2.27"/><path d="M409.64 301.74 L408.72 302.66" stroke="#007000" stroke-width="2.27"/><path d="M409.64 296.22 L408.72 295.30" stroke="#007000" stroke-width="2.27"/><circle cx="412.40" cy="298.98" r="3.9" fill="none" stroke="#cfc200" stroke-width="1.4"/><circle cx="412.20" cy="298.28" r="0.6" fill="#e8e8e8"/><rect x="452.5" y="178.6" width="65.7" height="10.6" fill="none" stroke="#b8ac00" stroke-width="0.6"/><circle cx="457.70" cy="183.90" r="5.3" fill="#000" stroke="#9a9010" stroke-width="0.35"/><circle cx="457.70" cy="183.90" r="3.8" fill="none" stroke="#cfc200" stroke-width="1.15"/><circle cx="457.50" cy="183.20" r="0.6" fill="#e8e8e8"/><circle cx="468.76" cy="183.90" r="5.3" fill="#000" stroke="#9a9010" stroke-width="0.35"/><circle cx="468.76" cy="183.90" r="3.8" fill="none" stroke="#cfc200" stroke-width="1.15"/><circle cx="468.56" cy="183.20" r="0.6" fill="#e8e8e8"/><circle cx="479.82" cy="183.90" r="5.3" fill="#000" stroke="#9a9010" stroke-width="0.35"/><circle cx="479.82" cy="183.90" r="3.8" fill="none" stroke="#cfc200" stroke-width="1.15"/><circle cx="479.62" cy="183.20" r="0.6" fill="#e8e8e8"/><circle cx="490.88" cy="183.90" r="5.3" fill="#000" stroke="#9a9010" stroke-width="0.35"/><circle cx="490.88" cy="183.90" r="3.8" fill="none" stroke="#cfc200" stroke-width="1.15"/><circle cx="490.68" cy="183.20" r="0.6" fill="#e8e8e8"/><circle cx="501.94" cy="183.90" r="5.3" fill="#000" stroke="#9a9010" stroke-width="0.35"/><circle cx="501.94" cy="183.90" r="3.8" fill="none" stroke="#cfc200" stroke-width="1.15"/><circle cx="501.74" cy="183.20" r="0.6" fill="#e8e8e8"/><circle cx="513.00" cy="183.90" r="5.3" fill="#000" stroke="#9a9010" stroke-width="0.35"/><rect x="509.50" y="180.40" width="7.0" height="7.0" fill="none" stroke="#cfc200" stroke-width="1.15"/><circle cx="512.80" cy="183.20" r="0.6" fill="#e8e8e8"/><rect x="465.4" y="230" width="11.2" height="45" fill="none" stroke="#b8ac00" stroke-width="0.6"/><circle cx="471.00" cy="235.60" r="5.3" fill="#000" stroke="#9a9010" stroke-width="0.35"/><rect x="467.40" y="232.00" width="7.2" height="7.2" fill="none" stroke="#cfc200" stroke-width="1.15"/><circle cx="470.80" cy="234.90" r="0.6" fill="#e8e8e8"/><circle cx="471.00" cy="246.72" r="5.3" fill="#000" stroke="#9a9010" stroke-width="0.35"/><path d="M473.69 249.41 L474.61 250.33" stroke="#c01010" stroke-width="2.23"/><path d="M473.69 244.03 L474.61 243.11" stroke="#c01010" stroke-width="2.23"/><path d="M468.31 249.41 L467.39 250.33" stroke="#c01010" stroke-width="2.23"/><path d="M468.31 244.03 L467.39 243.11" stroke="#c01010" stroke-width="2.23"/><circle cx="471.00" cy="246.72" r="3.8" fill="none" stroke="#cfc200" stroke-width="1.15"/><circle cx="470.80" cy="246.02" r="0.6" fill="#e8e8e8"/><circle cx="471.00" cy="257.84" r="5.3" fill="#000" stroke="#9a9010" stroke-width="0.35"/><circle cx="471.00" cy="257.84" r="3.8" fill="none" stroke="#cfc200" stroke-width="1.15"/><circle cx="470.80" cy="257.14" r="0.6" fill="#e8e8e8"/><circle cx="471.00" cy="268.96" r="5.3" fill="#000" stroke="#9a9010" stroke-width="0.35"/><circle cx="471.00" cy="268.96" r="3.8" fill="none" stroke="#cfc200" stroke-width="1.15"/><circle cx="470.80" cy="268.26" r="0.6" fill="#e8e8e8"/><rect x="452" y="350.4" width="44.6" height="11.2" fill="none" stroke="#b8ac00" stroke-width="0.6"/><circle cx="457.40" cy="356.00" r="5.3" fill="#000" stroke="#9a9010" stroke-width="0.35"/><rect x="453.80" y="352.40" width="7.2" height="7.2" fill="none" stroke="#cfc200" stroke-width="1.15"/><circle cx="457.20" cy="355.30" r="0.6" fill="#e8e8e8"/><circle cx="468.46" cy="356.00" r="5.3" fill="#000" stroke="#9a9010" stroke-width="0.35"/><circle cx="468.46" cy="356.00" r="3.8" fill="none" stroke="#cfc200" stroke-width="1.15"/><circle cx="468.26" cy="355.30" r="0.6" fill="#e8e8e8"/><circle cx="479.52" cy="356.00" r="5.3" fill="#000" stroke="#9a9010" stroke-width="0.35"/><circle cx="479.52" cy="356.00" r="3.8" fill="none" stroke="#cfc200" stroke-width="1.15"/><circle cx="479.32" cy="355.30" r="0.6" fill="#e8e8e8"/><circle cx="490.58" cy="356.00" r="5.3" fill="#000" stroke="#9a9010" stroke-width="0.35"/><path d="M493.27 358.69 L494.19 359.61" stroke="#c01010" stroke-width="2.23"/><path d="M493.27 353.31 L494.19 352.39" stroke="#c01010" stroke-width="2.23"/><path d="M487.89 358.69 L486.97 359.61" stroke="#c01010" stroke-width="2.23"/><path d="M487.89 353.31 L486.97 352.39" stroke="#c01010" stroke-width="2.23"/><circle cx="490.58" cy="356.00" r="3.8" fill="none" stroke="#cfc200" stroke-width="1.15"/><circle cx="490.38" cy="355.30" r="0.6" fill="#e8e8e8"/><circle cx="489.10" cy="293.30" r="5.8" fill="#000" stroke="#9a9010" stroke-width="0.35"/><circle cx="489.10" cy="293.30" r="4.0" fill="none" stroke="#cfc200" stroke-width="0.95"/><circle cx="488.90" cy="292.60" r="0.6" fill="#e8e8e8"/><circle cx="522.80" cy="293.30" r="5.8" fill="#000" stroke="#9a9010" stroke-width="0.35"/><path d="M525.63 296.13 L526.76 297.26" stroke="#c01010" stroke-width="2.44"/><path d="M525.63 290.47 L526.76 289.34" stroke="#c01010" stroke-width="2.44"/><path d="M519.97 296.13 L518.84 297.26" stroke="#c01010" stroke-width="2.44"/><path d="M519.97 290.47 L518.84 289.34" stroke="#c01010" stroke-width="2.44"/><circle cx="522.80" cy="293.30" r="4.0" fill="none" stroke="#cfc200" stroke-width="0.95"/><circle cx="522.60" cy="292.60" r="0.6" fill="#e8e8e8"/><circle cx="445.4" cy="292.4" r="2.4" fill="#007000"/><circle cx="445.4" cy="292.4" r="1.1" fill="#e0e0e0"/><circle cx="460.2" cy="311.3" r="2.4" fill="#007000"/><circle cx="460.2" cy="311.3" r="1.1" fill="#e0e0e0"/><text transform="translate(356.00 115.40) rotate(0) translate(0.64 0) scale(0.820 1)" x="0" y="3.50" font-family="Liberation Sans" font-size="10.17" letter-spacing="1.557" fill="#8e8e92" text-anchor="middle" font-weight="normal" opacity="1">ESP32 Weather Station</text><text transform="translate(353.20 115.90) rotate(0) translate(0.60 0) scale(0.820 1)" x="0" y="3.10" font-family="Liberation Sans" font-size="9.01" letter-spacing="1.465" fill="#8e8e92" text-anchor="middle" font-weight="normal" opacity="0.6">Weather</text><text transform="translate(166.40 137.60) rotate(-90) translate(0.00 0) scale(0.863 1)" x="0" y="2.30" font-family="Liberation Sans" font-size="6.69" letter-spacing="0.000" fill="#8e8e92" text-anchor="middle" font-weight="normal" opacity="1">SW1</text><text transform="translate(191.30 137.60) rotate(-90) translate(0.00 0) scale(0.863 1)" x="0" y="2.30" font-family="Liberation Sans" font-size="6.69" letter-spacing="0.000" fill="#cfc200" text-anchor="middle" font-weight="normal" opacity="1">SW1</text><text transform="translate(218.20 135.80) rotate(-90) translate(0.07 0) scale(0.880 1)" x="0" y="2.30" font-family="Liberation Sans" font-size="6.69" letter-spacing="0.159" fill="#cfc200" text-anchor="middle" font-weight="normal" opacity="1">SW_Push</text><text transform="translate(242.70 116.30) rotate(0) translate(0.17 0) scale(0.880 1)" x="0" y="2.30" font-family="Liberation Sans" font-size="6.69" letter-spacing="0.376" fill="#8e8e92" text-anchor="middle" font-weight="normal" opacity="1">RV1</text><text transform="translate(243.20 156.30) rotate(0) translate(0.38 0) scale(0.880 1)" x="0" y="2.30" font-family="Liberation Sans" font-size="6.69" letter-spacing="0.870" fill="#cfc200" text-anchor="middle" font-weight="normal" opacity="1">10K</text><text transform="translate(205.50 165.20) rotate(0) translate(0.24 0) scale(0.880 1)" x="0" y="2.30" font-family="Liberation Sans" font-size="6.69" letter-spacing="0.544" fill="#8e8e92" text-anchor="middle" font-weight="normal" opacity="1">R4</text><text transform="translate(205.50 181.60) rotate(0) translate(0.38 0) scale(0.880 1)" x="0" y="2.30" font-family="Liberation Sans" font-size="6.69" letter-spacing="0.870" fill="#cfc200" text-anchor="middle" font-weight="normal" opacity="1">10K</text><text transform="translate(217.40 194.40) rotate(-90) translate(0.01 0) scale(0.880 1)" x="0" y="2.30" font-family="Liberation Sans" font-size="6.69" letter-spacing="0.031" fill="#cfc200" text-anchor="middle" font-weight="normal" opacity="1">LED</text><text transform="translate(234.00 194.40) rotate(-90) translate(0.24 0) scale(0.880 1)" x="0" y="2.30" font-family="Liberation Sans" font-size="6.69" letter-spacing="0.544" fill="#8e8e92" text-anchor="middle" font-weight="normal" opacity="1">D1</text><text transform="translate(217.40 232.20) rotate(-90) translate(0.01 0) scale(0.880 1)" x="0" y="2.30" font-family="Liberation Sans" font-size="6.69" letter-spacing="0.031" fill="#cfc200" text-anchor="middle" font-weight="normal" opacity="1">LED</text><text transform="translate(233.50 233.00) rotate(-90) translate(0.24 0) scale(0.880 1)" x="0" y="2.30" font-family="Liberation Sans" font-size="6.69" letter-spacing="0.544" fill="#8e8e92" text-anchor="middle" font-weight="normal" opacity="1">D2</text><text transform="translate(251.50 196.20) rotate(0) translate(0.55 0) scale(0.880 1)" x="0" y="2.30" font-family="Liberation Sans" font-size="6.69" letter-spacing="1.241" fill="#cfc200" text-anchor="middle" font-weight="normal" opacity="1">330</text><text transform="translate(251.50 211.90) rotate(0) translate(0.24 0) scale(0.880 1)" x="0" y="2.30" font-family="Liberation Sans" font-size="6.69" letter-spacing="0.544" fill="#8e8e92" text-anchor="middle" font-weight="normal" opacity="1">R1</text><text transform="translate(250.50 234.40) rotate(0) translate(0.55 0) scale(0.880 1)" x="0" y="2.30" font-family="Liberation Sans" font-size="6.69" letter-spacing="1.241" fill="#cfc200" text-anchor="middle" font-weight="normal" opacity="1">330</text><text transform="translate(251.50 249.60) rotate(0) translate(0.24 0) scale(0.880 1)" x="0" y="2.30" font-family="Liberation Sans" font-size="6.69" letter-spacing="0.544" fill="#8e8e92" text-anchor="middle" font-weight="normal" opacity="1">R2</text><text transform="translate(210.50 240.40) rotate(-90) translate(0.39 0) scale(0.880 1)" x="0" y="2.30" font-family="Liberation Sans" font-size="6.69" letter-spacing="0.893" fill="#8e8e92" text-anchor="middle" font-weight="normal" opacity="1">J1</text><text transform="translate(211.20 316.00) rotate(-90) translate(0.39 0) scale(0.880 1)" x="0" y="2.30" font-family="Liberation Sans" font-size="6.69" letter-spacing="0.893" fill="#8e8e92" text-anchor="middle" font-weight="normal" opacity="1">J2</text><text transform="translate(159.80 236.50) rotate(-90) translate(0.31 0) scale(0.880 1)" x="0" y="2.30" font-family="Liberation Sans" font-size="6.69" letter-spacing="0.709" fill="#cfc200" text-anchor="middle" font-weight="normal" opacity="1">Screw_Terminal_01x03</text><text transform="translate(159.60 316.00) rotate(-90) translate(0.23 0) scale(0.880 1)" x="0" y="2.30" font-family="Liberation Sans" font-size="6.69" letter-spacing="0.529" fill="#cfc200" text-anchor="middle" font-weight="normal" opacity="1">Screw_Terminal_01x03</text><text transform="translate(167.10 234.40) rotate(-90) translate(0.11 0) scale(0.880 1)" x="0" y="2.30" font-family="Liberation Sans" font-size="6.69" letter-spacing="0.254" fill="#8e8e92" text-anchor="middle" font-weight="normal" opacity="1">GPIO13  GPIO12  GPIO14</text><text transform="translate(166.80 317.80) rotate(-90) translate(0.16 0) scale(0.880 1)" x="0" y="2.30" font-family="Liberation Sans" font-size="6.69" letter-spacing="0.369" fill="#8e8e92" text-anchor="middle" font-weight="normal" opacity="1">VCC  3V3  GND</text><text transform="translate(299.50 218.00) rotate(-90) translate(0.09 0) scale(0.880 1)" x="0" y="2.30" font-family="Liberation Sans" font-size="6.69" letter-spacing="0.194" fill="#cfc200" text-anchor="middle" font-weight="normal" opacity="1">ESP32</text><text transform="translate(412.40 225.00) rotate(-90) translate(0.09 0) scale(0.880 1)" x="0" y="2.30" font-family="Liberation Sans" font-size="6.69" letter-spacing="0.194" fill="#cfc200" text-anchor="middle" font-weight="normal" opacity="1">ESP32</text><text transform="translate(286.80 143.30) rotate(0) translate(0.00 0) scale(0.818 1)" x="0" y="2.30" font-family="Liberation Sans" font-size="6.69" letter-spacing="0.000" fill="#8e8e92" text-anchor="end" font-weight="normal" opacity="1">EN</text><text transform="translate(286.80 154.42) rotate(0) translate(0.41 0) scale(0.880 1)" x="0" y="2.30" font-family="Liberation Sans" font-size="6.69" letter-spacing="0.465" fill="#8e8e92" text-anchor="end" font-weight="normal" opacity="1">GPIO36</text><text transform="translate(286.80 165.54) rotate(0) translate(0.41 0) scale(0.880 1)" x="0" y="2.30" font-family="Liberation Sans" font-size="6.69" letter-spacing="0.465" fill="#8e8e92" text-anchor="end" font-weight="normal" opacity="1">GPIO39</text><text transform="translate(286.80 176.66) rotate(0) translate(0.41 0) scale(0.880 1)" x="0" y="2.30" font-family="Liberation Sans" font-size="6.69" letter-spacing="0.465" fill="#8e8e92" text-anchor="end" font-weight="normal" opacity="1">GPIO34</text><text transform="translate(286.80 187.78) rotate(0) translate(0.41 0) scale(0.880 1)" x="0" y="2.30" font-family="Liberation Sans" font-size="6.69" letter-spacing="0.465" fill="#2f7c98" text-anchor="end" font-weight="normal" opacity="1">GPIO35</text><text transform="translate(286.80 198.90) rotate(0) translate(0.41 0) scale(0.880 1)" x="0" y="2.30" font-family="Liberation Sans" font-size="6.69" letter-spacing="0.465" fill="#8e8e92" text-anchor="end" font-weight="normal" opacity="1">GPIO32</text><text transform="translate(286.80 210.02) rotate(0) translate(0.41 0) scale(0.880 1)" x="0" y="2.30" font-family="Liberation Sans" font-size="6.69" letter-spacing="0.465" fill="#8e8e92" text-anchor="end" font-weight="normal" opacity="1">GPIO33</text><text transform="translate(286.80 221.14) rotate(0) translate(0.41 0) scale(0.880 1)" x="0" y="2.30" font-family="Liberation Sans" font-size="6.69" letter-spacing="0.465" fill="#8e8e92" text-anchor="end" font-weight="normal" opacity="1">GPIO25</text><text transform="translate(286.80 232.26) rotate(0) translate(0.41 0) scale(0.880 1)" x="0" y="2.30" font-family="Liberation Sans" font-size="6.69" letter-spacing="0.465" fill="#2f7c98" text-anchor="end" font-weight="normal" opacity="1">GPIO26</text><text transform="translate(286.80 243.38) rotate(0) translate(0.41 0) scale(0.880 1)" x="0" y="2.30" font-family="Liberation Sans" font-size="6.69" letter-spacing="0.465" fill="#2f7c98" text-anchor="end" font-weight="normal" opacity="1">GPIO27</text><text transform="translate(286.80 254.50) rotate(0) translate(0.41 0) scale(0.880 1)" x="0" y="2.30" font-family="Liberation Sans" font-size="6.69" letter-spacing="0.465" fill="#2f7c98" text-anchor="end" font-weight="normal" opacity="1">GPIO14</text><text transform="translate(286.80 265.62) rotate(0) translate(0.41 0) scale(0.880 1)" x="0" y="2.30" font-family="Liberation Sans" font-size="6.69" letter-spacing="0.465" fill="#2f7c98" text-anchor="end" font-weight="normal" opacity="1">GPIO12</text><text transform="translate(286.80 276.74) rotate(0) translate(0.41 0) scale(0.880 1)" x="0" y="2.30" font-family="Liberation Sans" font-size="6.69" letter-spacing="0.465" fill="#2f7c98" text-anchor="end" font-weight="normal" opacity="1">GPIO13</text><text transform="translate(286.80 287.86) rotate(0) translate(0.00 0) scale(0.784 1)" x="0" y="2.30" font-family="Liberation Sans" font-size="6.69" letter-spacing="0.000" fill="#8e8e92" text-anchor="end" font-weight="normal" opacity="1">GND</text><text transform="translate(286.80 298.98) rotate(0) translate(0.92 0) scale(0.880 1)" x="0" y="2.30" font-family="Liberation Sans" font-size="6.69" letter-spacing="1.046" fill="#2f7c98" text-anchor="end" font-weight="normal" opacity="1">VIN</text><text transform="translate(426.20 143.30) rotate(0) translate(0.00 0) scale(0.880 1)" x="0" y="2.30" font-family="Liberation Sans" font-size="6.69" letter-spacing="0.465" fill="#2f7c98" text-anchor="start" font-weight="normal" opacity="1">GPIO23</text><text transform="translate(426.20 154.42) rotate(0) translate(0.00 0) scale(0.880 1)" x="0" y="2.30" font-family="Liberation Sans" font-size="6.69" letter-spacing="0.465" fill="#2f7c98" text-anchor="start" font-weight="normal" opacity="1">GPIO22</text><text transform="translate(426.20 165.54) rotate(0) translate(0.00 0) scale(0.880 1)" x="0" y="2.30" font-family="Liberation Sans" font-size="6.69" letter-spacing="0.407" fill="#2f7c98" text-anchor="start" font-weight="normal" opacity="1">GPIO1</text><text transform="translate(426.20 176.66) rotate(0) translate(0.00 0) scale(0.880 1)" x="0" y="2.30" font-family="Liberation Sans" font-size="6.69" letter-spacing="0.407" fill="#2f7c98" text-anchor="start" font-weight="normal" opacity="1">GPIO3</text><text transform="translate(426.20 187.78) rotate(0) translate(0.00 0) scale(0.880 1)" x="0" y="2.30" font-family="Liberation Sans" font-size="6.69" letter-spacing="0.465" fill="#2f7c98" text-anchor="start" font-weight="normal" opacity="1">GPIO21</text><text transform="translate(426.20 198.90) rotate(0) translate(0.00 0) scale(0.880 1)" x="0" y="2.30" font-family="Liberation Sans" font-size="6.69" letter-spacing="0.465" fill="#2f7c98" text-anchor="start" font-weight="normal" opacity="1">GPIO19</text><text transform="translate(426.20 210.02) rotate(0) translate(0.00 0) scale(0.880 1)" x="0" y="2.30" font-family="Liberation Sans" font-size="6.69" letter-spacing="0.465" fill="#2f7c98" text-anchor="start" font-weight="normal" opacity="1">GPIO18</text><text transform="translate(426.20 221.14) rotate(0) translate(0.00 0) scale(0.880 1)" x="0" y="2.30" font-family="Liberation Sans" font-size="6.69" letter-spacing="0.407" fill="#2f7c98" text-anchor="start" font-weight="normal" opacity="1">GPIO5</text><text transform="translate(426.20 232.26) rotate(0) translate(0.00 0) scale(0.880 1)" x="0" y="2.30" font-family="Liberation Sans" font-size="6.69" letter-spacing="0.465" fill="#2f7c98" text-anchor="start" font-weight="normal" opacity="1">GPIO17</text><text transform="translate(426.20 243.38) rotate(0) translate(0.00 0) scale(0.880 1)" x="0" y="2.30" font-family="Liberation Sans" font-size="6.69" letter-spacing="0.465" fill="#2f7c98" text-anchor="start" font-weight="normal" opacity="1">GPIO16</text><text transform="translate(426.20 254.50) rotate(0) translate(0.00 0) scale(0.880 1)" x="0" y="2.30" font-family="Liberation Sans" font-size="6.69" letter-spacing="0.407" fill="#2f7c98" text-anchor="start" font-weight="normal" opacity="1">GPIO4</text><text transform="translate(426.20 265.62) rotate(0) translate(0.00 0) scale(0.880 1)" x="0" y="2.30" font-family="Liberation Sans" font-size="6.69" letter-spacing="0.407" fill="#2f7c98" text-anchor="start" font-weight="normal" opacity="1">GPIO2</text><text transform="translate(426.20 276.74) rotate(0) translate(0.00 0) scale(0.880 1)" x="0" y="2.30" font-family="Liberation Sans" font-size="6.69" letter-spacing="0.465" fill="#2f7c98" text-anchor="start" font-weight="normal" opacity="1">GPIO15</text><text transform="translate(426.20 287.86) rotate(0) translate(0.00 0) scale(0.784 1)" x="0" y="2.30" font-family="Liberation Sans" font-size="6.69" letter-spacing="0.000" fill="#8e8e92" text-anchor="start" font-weight="normal" opacity="1">GND</text><text transform="translate(426.20 298.98) rotate(0) translate(0.00 0) scale(0.880 1)" x="0" y="2.30" font-family="Liberation Sans" font-size="6.69" letter-spacing="0.671" fill="#8e8e92" text-anchor="start" font-weight="normal" opacity="1">3V3</text><text transform="translate(446.60 183.00) rotate(-90) translate(0.00 0) scale(0.782 1)" x="0" y="2.30" font-family="Liberation Sans" font-size="6.69" letter-spacing="0.000" fill="#cfc200" text-anchor="middle" font-weight="normal" opacity="1">SD_CARD</text><text transform="translate(480.00 184.20) rotate(0) translate(0.31 0) scale(0.880 1)" x="0" y="1.90" font-family="Liberation Sans" font-size="5.52" letter-spacing="0.714" fill="#8a8a80" text-anchor="middle" font-weight="normal" opacity="1">SD_CARD</text><text transform="translate(457.70 197.50) rotate(-90) translate(0.00 0) scale(0.868 1)" x="0" y="2.05" font-family="Liberation Sans" font-size="5.96" letter-spacing="0.000" fill="#b8a8a8" text-anchor="middle" font-weight="normal" opacity="1">GND</text><text transform="translate(468.76 199.20) rotate(-90) translate(0.35 0) scale(0.880 1)" x="0" y="2.05" font-family="Liberation Sans" font-size="5.96" letter-spacing="0.795" fill="#b8a8a8" text-anchor="middle" font-weight="normal" opacity="1">MISO</text><text transform="translate(479.82 197.50) rotate(-90) translate(0.32 0) scale(0.880 1)" x="0" y="2.05" font-family="Liberation Sans" font-size="5.96" letter-spacing="0.738" fill="#b8a8a8" text-anchor="middle" font-weight="normal" opacity="1">CLK</text><text transform="translate(490.88 199.20) rotate(-90) translate(0.35 0) scale(0.880 1)" x="0" y="2.05" font-family="Liberation Sans" font-size="5.96" letter-spacing="0.795" fill="#b8a8a8" text-anchor="middle" font-weight="normal" opacity="1">MOSI</text><text transform="translate(501.94 197.50) rotate(-90) translate(0.11 0) scale(0.880 1)" x="0" y="2.05" font-family="Liberation Sans" font-size="5.96" letter-spacing="0.244" fill="#b8a8a8" text-anchor="middle" font-weight="normal" opacity="1">CS</text><text transform="translate(513.00 197.50) rotate(-90) translate(0.54 0) scale(0.880 1)" x="0" y="2.05" font-family="Liberation Sans" font-size="5.96" letter-spacing="1.233" fill="#8e8e92" text-anchor="middle" font-weight="normal" opacity="1">3V3</text><text transform="translate(523.50 178.00) rotate(-90) translate(0.00 0) scale(0.813 1)" x="0" y="2.30" font-family="Liberation Sans" font-size="6.69" letter-spacing="0.000" fill="#8e8e92" text-anchor="middle" font-weight="normal" opacity="1">SD_CARD1</text><text transform="translate(470.60 220.20) rotate(0) translate(0.09 0) scale(0.880 1)" x="0" y="2.30" font-family="Liberation Sans" font-size="6.69" letter-spacing="0.201" fill="#b8a8a8" text-anchor="middle" font-weight="normal" opacity="1">BMP_1</text><text transform="translate(482.00 236.60) rotate(0) translate(0.00 0) scale(0.880 1)" x="0" y="2.30" font-family="Liberation Sans" font-size="6.69" letter-spacing="0.961" fill="#8e8e92" text-anchor="start" font-weight="normal" opacity="1">VIN</text><text transform="translate(482.00 247.72) rotate(0) translate(0.00 0) scale(0.774 1)" x="0" y="2.30" font-family="Liberation Sans" font-size="6.69" letter-spacing="0.000" fill="#8e8e92" text-anchor="start" font-weight="normal" opacity="1">GND</text><text transform="translate(482.00 258.84) rotate(0) translate(0.00 0) scale(0.880 1)" x="0" y="2.30" font-family="Liberation Sans" font-size="6.69" letter-spacing="0.031" fill="#8e8e92" text-anchor="start" font-weight="normal" opacity="1">SCL</text><text transform="translate(482.00 269.96) rotate(0) translate(0.00 0) scale(0.836 1)" x="0" y="2.30" font-family="Liberation Sans" font-size="6.69" letter-spacing="0.000" fill="#8e8e92" text-anchor="start" font-weight="normal" opacity="1">SDA</text><text transform="translate(470.70 283.50) rotate(0) translate(0.20 0) scale(0.880 1)" x="0" y="2.30" font-family="Liberation Sans" font-size="6.69" letter-spacing="0.462" fill="#cfc200" text-anchor="middle" font-weight="normal" opacity="1">BMP180</text><text transform="translate(471.20 254.00) rotate(-90) translate(0.83 0) scale(0.880 1)" x="0" y="1.80" font-family="Liberation Sans" font-size="5.23" letter-spacing="1.895" fill="#d8d8c8" text-anchor="middle" font-weight="normal" opacity="0.85">BMP180</text><text transform="translate(473.50 356.20) rotate(0) translate(2.13 0) scale(0.880 1)" x="0" y="1.80" font-family="Liberation Sans" font-size="5.23" letter-spacing="4.850" fill="#d8d8c8" text-anchor="middle" font-weight="normal" opacity="0.85">DHT</text><text transform="translate(484.00 184.00) rotate(0) translate(0.67 0) scale(0.880 1)" x="0" y="1.80" font-family="Liberation Sans" font-size="5.23" letter-spacing="1.514" fill="#d8d8c8" text-anchor="middle" font-weight="normal" opacity="0.7">SD_CARD</text><text transform="translate(461.00 285.20) rotate(0) translate(0.38 0) scale(0.880 1)" x="0" y="2.30" font-family="Liberation Sans" font-size="6.69" letter-spacing="0.870" fill="#cfc200" text-anchor="middle" font-weight="normal" opacity="1">10K</text><text transform="translate(460.50 300.10) rotate(0) translate(0.00 0) scale(0.878 1)" x="0" y="2.30" font-family="Liberation Sans" font-size="6.69" letter-spacing="0.000" fill="#8e8e92" text-anchor="middle" font-weight="normal" opacity="1">R5</text><text transform="translate(505.00 282.30) rotate(0) translate(0.24 0) scale(0.880 1)" x="0" y="2.30" font-family="Liberation Sans" font-size="6.69" letter-spacing="0.544" fill="#8e8e92" text-anchor="middle" font-weight="normal" opacity="1">R6</text><text transform="translate(506.30 303.30) rotate(0) translate(0.00 0) scale(0.839 1)" x="0" y="2.30" font-family="Liberation Sans" font-size="6.69" letter-spacing="0.000" fill="#cfc200" text-anchor="middle" font-weight="normal" opacity="1">R_PHOTO</text><text transform="translate(478.50 317.50) rotate(-90) translate(0.26 0) scale(0.880 1)" x="0" y="2.30" font-family="Liberation Sans" font-size="6.69" letter-spacing="0.586" fill="#cfc200" text-anchor="middle" font-weight="normal" opacity="1">4K7</text><text transform="translate(460.00 318.00) rotate(-90) translate(0.00 0) scale(0.819 1)" x="0" y="2.30" font-family="Liberation Sans" font-size="6.69" letter-spacing="0.000" fill="#8e8e92" text-anchor="middle" font-weight="normal" opacity="1">R7</text><text transform="translate(479.50 320.00) rotate(-90) translate(0.00 0) scale(0.864 1)" x="0" y="2.30" font-family="Liberation Sans" font-size="6.69" letter-spacing="0.000" fill="#8e8e92" text-anchor="middle" font-weight="normal" opacity="1">NOT_CONNECTED</text><text transform="translate(458.00 336.00) rotate(-90) translate(0.00 0) scale(0.815 1)" x="0" y="2.30" font-family="Liberation Sans" font-size="6.69" letter-spacing="0.000" fill="#8e8e92" text-anchor="middle" font-weight="normal" opacity="1">VCC</text><text transform="translate(469.00 336.00) rotate(-90) translate(0.03 0) scale(0.880 1)" x="0" y="2.30" font-family="Liberation Sans" font-size="6.69" letter-spacing="0.069" fill="#2f7c98" text-anchor="middle" font-weight="normal" opacity="1">DATA</text><text transform="translate(491.00 336.00) rotate(-90) translate(0.00 0) scale(0.774 1)" x="0" y="2.30" font-family="Liberation Sans" font-size="6.69" letter-spacing="0.000" fill="#8e8e92" text-anchor="middle" font-weight="normal" opacity="1">GND</text><text transform="translate(445.50 353.00) rotate(-90) translate(0.00 0) scale(0.850 1)" x="0" y="2.30" font-family="Liberation Sans" font-size="6.69" letter-spacing="0.000" fill="#8e8e92" text-anchor="middle" font-weight="normal" opacity="1">DHT_1</text><text transform="translate(500.40 355.50) rotate(-90) translate(0.00 0) scale(0.873 1)" x="0" y="2.30" font-family="Liberation Sans" font-size="6.69" letter-spacing="0.000" fill="#cfc200" text-anchor="middle" font-weight="normal" opacity="1">DHT</text><text transform="translate(353.50 353.40) rotate(0) translate(0.16 0) scale(0.880 1)" x="0" y="2.30" font-family="Liberation Sans" font-size="6.69" letter-spacing="0.375" fill="#cfc200" text-anchor="middle" font-weight="normal" opacity="1">ESP32_Devkit_DOIT_V1</text><text transform="translate(272.00 335.80) rotate(0) translate(0.52 0) scale(0.880 1)" x="0" y="2.00" font-family="Liberation Sans" font-size="5.81" letter-spacing="1.185" fill="#8e8e92" text-anchor="middle" font-weight="normal" opacity="0.85">OSHW-Symbol_5.7x6mm_SilkScreen</text><rect x="216.2" y="326.4" width="30.4" height="17" rx="0.8" fill="#8e8e92"/><path d="M222.3 326.6 L221.20000000000002 324 A2.1 2.1 0 0 1 222.4 320.8 V319.3 A1 1 0 0 1 224.4 319.3 V320.8 A2.1 2.1 0 0 1 225.6 324 L224.5 326.6 Z" fill="#8e8e92"/><circle cx="223.4" cy="323.3" r="0.9" fill="#7d7200"/><path d="M222.3 343.2 L221.20000000000002 345.8 A2.1 2.1 0 0 0 222.4 349 V350.5 A1 1 0 0 0 224.4 350.5 V349 A2.1 2.1 0 0 0 225.6 345.8 L224.5 343.2 Z" fill="#8e8e92"/><circle cx="223.4" cy="346.5" r="0.9" fill="#7d7200"/><path d="M230.1 326.6 L229.0 324 A2.1 2.1 0 0 1 230.2 320.8 V319.3 A1 1 0 0 1 232.2 319.3 V320.8 A2.1 2.1 0 0 1 233.39999999999998 324 L232.29999999999998 326.6 Z" fill="#8e8e92"/><circle cx="231.2" cy="323.3" r="0.9" fill="#7d7200"/><path d="M230.1 343.2 L229.0 345.8 A2.1 2.1 0 0 0 230.2 349 V350.5 A1 1 0 0 0 232.2 350.5 V349 A2.1 2.1 0 0 0 233.39999999999998 345.8 L232.29999999999998 343.2 Z" fill="#8e8e92"/><circle cx="231.2" cy="346.5" r="0.9" fill="#7d7200"/><path d="M237.8 326.6 L236.70000000000002 324 A2.1 2.1 0 0 1 237.9 320.8 V319.3 A1 1 0 0 1 239.9 319.3 V320.8 A2.1 2.1 0 0 1 241.1 324 L240.0 326.6 Z" fill="#8e8e92"/><circle cx="238.9" cy="323.3" r="0.9" fill="#7d7200"/><path d="M237.8 343.2 L236.70000000000002 345.8 A2.1 2.1 0 0 0 237.9 349 V350.5 A1 1 0 0 0 239.9 350.5 V349 A2.1 2.1 0 0 0 241.1 345.8 L240.0 343.2 Z" fill="#8e8e92"/><circle cx="238.9" cy="346.5" r="0.9" fill="#7d7200"/><path d="M220.5 338.5 Q224 331 231 333.5 Q236 335.5 240 329.5 M223 330.5 Q228 331 232 335 Q235.5 339 242.5 339.5" fill="none" stroke="#7d7200" stroke-width="1.5"/><path d="M244.5 339.5 L240.8 337.2 L241 341.6 Z" fill="#7d7200"/><path d="M237.5 328.8 l3 0.5 l-1.5 2.2" fill="none" stroke="#7d7200" stroke-width="1.1"/><path d="M278.25 331.89 L281.93 332.50 L281.93 337.90 L278.25 338.51 L277.76 339.69 L279.94 342.71 L276.11 346.54 L273.09 344.36 L271.91 344.85 L271.30 348.53 L265.90 348.53 L265.29 344.85 L264.11 344.36 L261.09 346.54 L257.26 342.71 L259.44 339.69 L258.95 338.51 L255.27 337.90 L255.27 332.50 L258.95 331.89 L259.44 330.71 L257.26 327.69 L261.09 323.86 L264.11 326.04 L265.29 325.55 L265.90 321.87 L271.30 321.87 L271.91 325.55 L273.09 326.04 L276.11 323.86 L279.94 327.69 L277.76 330.71 Z" fill="#8e8e92" /><path d="M262.3 350 L266.1 340.2 A3.5 3.5 0 1 1 271.1 340.2 L274.9 350 Z" fill="#7d7200"/><circle cx="253.8" cy="350.7" r="5.8" fill="none" stroke="#8e8e92" stroke-width="0.35"/><path d="M249.7 346.6 L257.9 354.8 M257.9 346.6 L249.7 354.8" stroke="#8e8e92" stroke-width="0.35"/><text transform="translate(246.80 357.60) rotate(0) translate(0.43 0) scale(0.780 1)" x="0" y="3.95" font-family="Liberation Sans" font-size="11.48" letter-spacing="1.097" fill="#8e8e92" text-anchor="middle" font-weight="normal" opacity="1">RandomNerdTutorials.com</text></svg></body></html>
